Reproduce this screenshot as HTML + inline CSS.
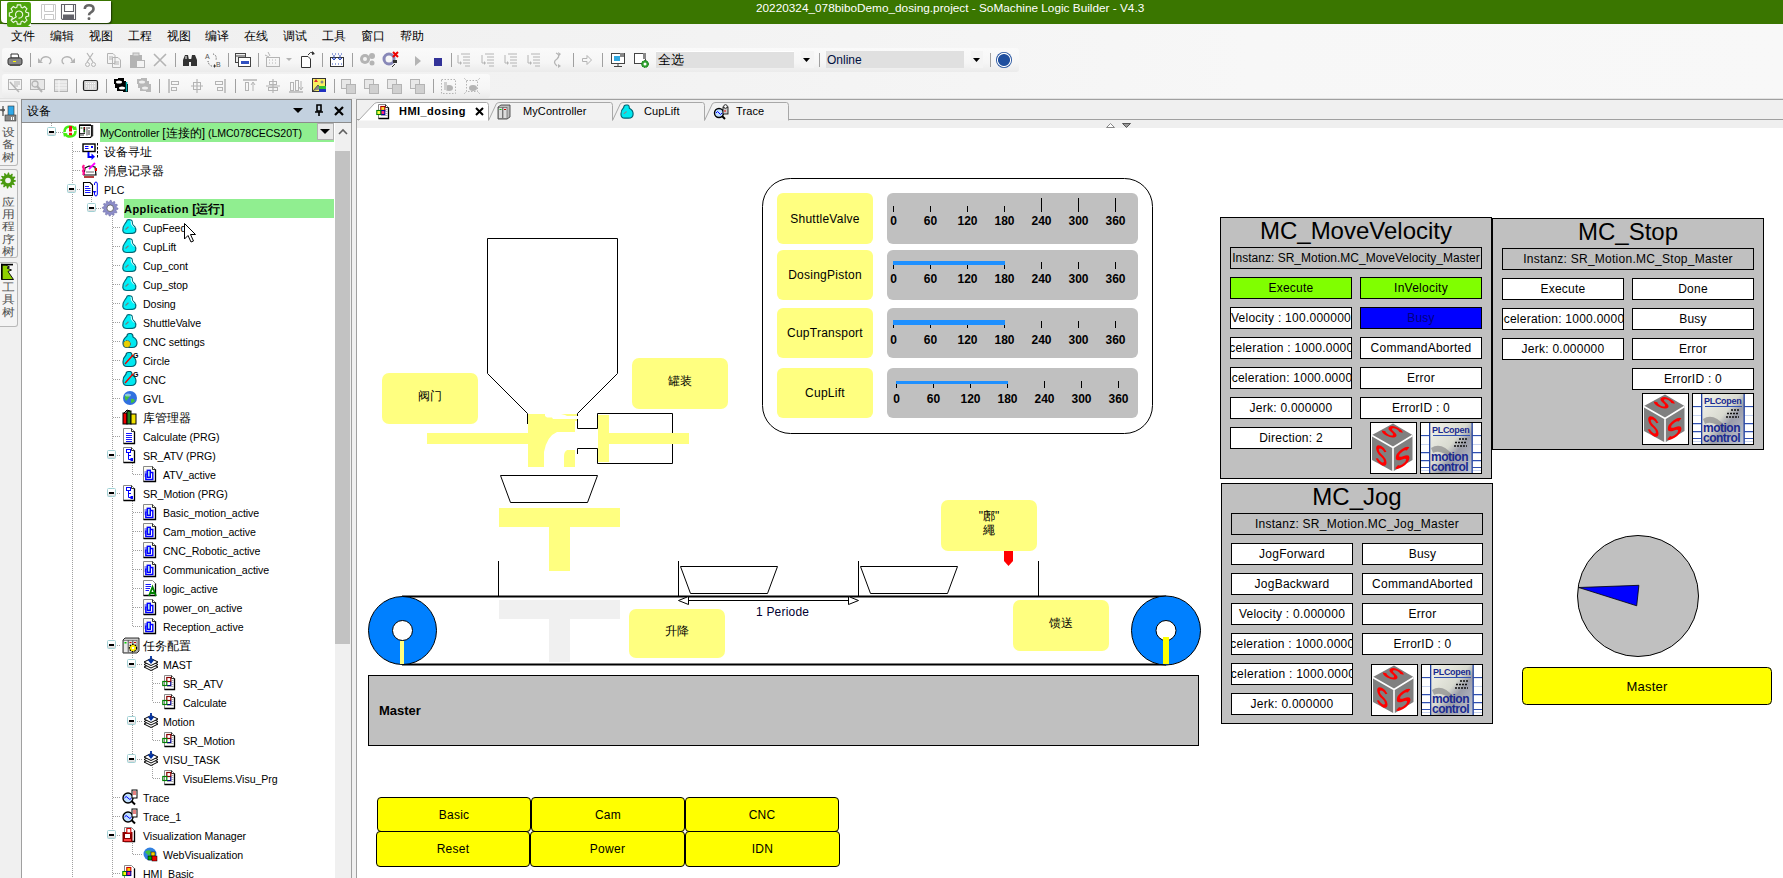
<!DOCTYPE html><html><head><meta charset="utf-8"><style>
*{margin:0;padding:0;box-sizing:border-box}
body{width:1783px;height:878px;overflow:hidden;background:#f0f0f0;font-family:"Liberation Sans",sans-serif;position:relative;color:#000}
.ab{position:absolute}
.t{position:absolute;white-space:nowrap}
svg{position:absolute;overflow:visible}
</style></head><body>

<div class="ab" style="left:0;top:24px;width:1783px;height:75px;background:linear-gradient(90deg,#efefef,#f3f3f3 40%,#f7f7f7 70%,#f8f8f8)"></div>
<div class="ab" style="left:0;top:0;width:1783px;height:24px;background:#3a7600"></div>
<div class="t" style="left:756px;top:0px;font-size:11.8px;color:#fff;line-height:17px">20220324_078biboDemo_dosing.project - SoMachine Logic Builder - V4.3</div>
<div class="ab" style="left:1px;top:1px;width:110px;height:22px;background:#fff;border-radius:0 0 4px 4px;box-shadow:1px 1px 1.5px rgba(0,0,0,.55)"></div>
<div class="ab" style="left:7px;top:2px;width:24px;height:25px;background:#4ea40e;border-radius:2px"></div>
<svg style="left:7px;top:2px" width="24" height="25" viewBox="0 0 24 25"><g fill="none" stroke="#f0f8e8" stroke-width="1.1">
<path d="M9.81 5.43 L10.34 2.84 L13.66 2.84 L14.19 5.43 L15.45 5.95 L17.66 4.50 L20.00 6.84 L18.55 9.05 L19.07 10.31 L21.66 10.84 L21.66 14.16 L19.07 14.69 L18.55 15.95 L20.00 18.16 L17.66 20.50 L15.45 19.05 L14.19 19.57 L13.66 22.16 L10.34 22.16 L9.81 19.57 L8.55 19.05 L6.34 20.50 L4.00 18.16 L5.45 15.95 L4.93 14.69 L2.34 14.16 L2.34 10.84 L4.93 10.31 L5.45 9.05 L4.00 6.84 L6.34 4.50 L8.55 5.95Z"/><path d="M5 17.5 L9.3 14.8 A3.6 3.6 0 1 1 11.5 16.1"/></g><path d="M21 24 L24 21 V24Z" fill="#fff"/></svg>
<svg style="left:40px;top:4px" width="18" height="17" viewBox="0 0 18 17"><path d="M1.5 0.5 H15.5 V15.5 H2.5 L1.5 14.5Z M4.5 0.5 V7.5 H13.5 V0.5 M4.5 15.5 V10.5 H13.5 V15.5" fill="none" stroke="#c8c8c8" stroke-width="1"/></svg>
<svg style="left:60px;top:4px" width="18" height="17" viewBox="0 0 18 17"><path d="M1.5 0.5 H15.5 V15.5 H2.5 L1.5 14.5Z M4.5 0.5 V7.5 H13.5 V0.5" fill="none" stroke="#606068" stroke-width="1.1"/><rect x="3" y="10.5" width="11" height="5" fill="#606068"/></svg>
<svg style="left:83px;top:4px" width="13" height="17" viewBox="0 0 13 17"><path d="M1.8 5 Q1.8 1.3 6 1.3 Q10.5 1.3 10.5 4.8 Q10.5 7 8 8.3 Q6 9.3 6 11.3" fill="none" stroke="#666" stroke-width="2.6"/><rect x="4.6" y="13.2" width="2.8" height="2.8" rx="1" fill="#666"/></svg>
<div class="t" style="left:11px;top:28px;font-size:12px;line-height:16px">文件</div>
<div class="t" style="left:50px;top:28px;font-size:12px;line-height:16px">编辑</div>
<div class="t" style="left:89px;top:28px;font-size:12px;line-height:16px">视图</div>
<div class="t" style="left:128px;top:28px;font-size:12px;line-height:16px">工程</div>
<div class="t" style="left:167px;top:28px;font-size:12px;line-height:16px">视图</div>
<div class="t" style="left:205px;top:28px;font-size:12px;line-height:16px">编译</div>
<div class="t" style="left:244px;top:28px;font-size:12px;line-height:16px">在线</div>
<div class="t" style="left:283px;top:28px;font-size:12px;line-height:16px">调试</div>
<div class="t" style="left:322px;top:28px;font-size:12px;line-height:16px">工具</div>
<div class="t" style="left:361px;top:28px;font-size:12px;line-height:16px">窗口</div>
<div class="t" style="left:400px;top:28px;font-size:12px;line-height:16px">帮助</div>
<div class="ab" style="left:2px;top:48px;width:1017px;height:24px;background:linear-gradient(#fafafa,#f6f6f6 60%,#ebebeb);border-radius:3px"></div>
<div class="ab" style="left:2px;top:74px;width:488px;height:24px;background:linear-gradient(#fafafa,#f6f6f6 60%,#ebebeb);border-radius:3px"></div>
<div class="ab" style="left:0;top:98px;width:1783px;height:1px;background:#e2e2e2"></div>
<div class="ab" style="left:21px;top:100px;width:331px;height:778px;background:#fff;border-left:1px solid #a0a0a0;border-right:1px solid #a0a0a0"></div>
<div class="ab" style="left:21px;top:99px;width:331px;height:24px;background:#c3d1df;border:1px solid #8c8c8c"></div>
<div class="t" style="left:27px;top:103px;font-size:12px;line-height:16px">设备</div>
<svg style="left:7px;top:52px" width="16" height="16" viewBox="0 0 16 16"><path d="M4 2 H11 L12 6 H4Z" fill="#fff" stroke="#333"/><rect x="1" y="6" width="14" height="7" rx="2" fill="#888" stroke="#333"/><rect x="3" y="12" width="10" height="2" fill="#555"/><rect x="6" y="9" width="3" height="1" fill="#ff0"/></svg>
<div class="ab" style="left:30px;top:53px;width:1px;height:14px;background:#a0a0a0"></div>
<svg style="left:38px;top:54px" width="14" height="12" viewBox="0 0 14 12"><path d="M3 7 A5 4 0 1 1 11 10" stroke="#b4b4b4" stroke-width="1.4" fill="none"/><path d="M0 4 L5 9 H0Z" fill="#b4b4b4"/></svg>
<svg style="left:61px;top:54px" width="14" height="12" viewBox="0 0 14 12"><path d="M11 7 A5 4 0 1 0 3 10" stroke="#b4b4b4" stroke-width="1.4" fill="none"/><path d="M14 4 L9 9 H14Z" fill="#b4b4b4"/></svg>
<svg style="left:85px;top:52px" width="11" height="16" viewBox="0 0 11 16"><path d="M2 1 L8 10 M8 1 L2 10" stroke="#b4b4b4" stroke-width="1.2"/><circle cx="2.5" cy="12.5" r="2" fill="none" stroke="#b4b4b4"/><circle cx="8.5" cy="12.5" r="2" fill="none" stroke="#b4b4b4"/></svg>
<svg style="left:106px;top:53px" width="16" height="14" viewBox="0 0 16 14"><path d="M1.5 0.5 H7 L9 2.5 V10.5 H1.5Z M6.5 4.5 H12 L14.5 7 V14.5 H6.5Z" fill="#f4f4f4" stroke="#b4b4b4"/><path d="M3 4 H7 M3 6 H6 M8 9 H13 M8 11 H13" stroke="#b4b4b4"/></svg>
<svg style="left:129px;top:52px" width="17" height="16" viewBox="0 0 17 16"><rect x="1.5" y="3.5" width="11" height="12" fill="#b4b4b4" stroke="#b4b4b4"/><rect x="4" y="1" width="6" height="3" fill="#ddd" stroke="#b4b4b4"/><rect x="7.5" y="8.5" width="8" height="7" fill="#f4f4f4" stroke="#b4b4b4"/></svg>
<svg style="left:153px;top:53px" width="14" height="14" viewBox="0 0 14 14"><path d="M1 1 L13 13 M13 1 L1 13" stroke="#b4b4b4" stroke-width="1.6"/></svg>
<div class="ab" style="left:175px;top:53px;width:1px;height:14px;background:#a0a0a0"></div>
<svg style="left:182px;top:53px" width="16" height="14" viewBox="0 0 16 14"><path d="M1 13 V7 L3 2 H6 L7 7 V13Z M9 13 V7 L10 2 H13 L15 7 V13Z" fill="#333"/><rect x="6" y="6" width="4" height="3" fill="#333"/><rect x="3" y="3" width="2" height="3" fill="#fff" opacity=".5"/></svg>
<svg style="left:205px;top:52px" width="17" height="16" viewBox="0 0 17 16"><text x="0" y="7" font-size="7" font-family="Liberation Sans" fill="#555">A</text><text x="11" y="15" font-size="7" font-family="Liberation Sans" fill="#555">B</text><path d="M3 9 Q4 15 9 14 M8 2 Q12 3 11 8" stroke="#555" stroke-dasharray="1 1" fill="none"/><path d="M9 12 L11 14 L9 16Z" fill="#333"/></svg>
<div class="ab" style="left:228px;top:53px;width:1px;height:14px;background:#a0a0a0"></div>
<svg style="left:234px;top:52px" width="17" height="16" viewBox="0 0 17 16"><rect x="1.5" y="1.5" width="10" height="9" fill="#eee" stroke="#444"/><rect x="4.5" y="5.5" width="12" height="9" fill="#fff" stroke="#444"/><rect x="7" y="9" width="8" height="3" fill="#3050c0"/><path d="M2 4 H11" stroke="#444"/></svg>
<div class="ab" style="left:258px;top:53px;width:1px;height:14px;background:#a0a0a0"></div>
<svg style="left:265px;top:52px" width="16" height="16" viewBox="0 0 16 16"><rect x="1.5" y="5.5" width="13" height="9" fill="none" stroke="#b4b4b4"/><path d="M4 8 H5 M7 8 H8 M10 8 H11 M4 11 H5 M7 11 H8 M10 11 H11" stroke="#b4b4b4"/><path d="M3 0 L5 4 M0 3 L4 5" stroke="#b4b4b4"/></svg>
<svg style="left:286px;top:58px" width="6" height="4" viewBox="0 0 6 4"><path d="M0 0 H6 L3 3Z" fill="#b4b4b4"/></svg>
<svg style="left:300px;top:51px" width="16" height="17" viewBox="0 0 16 17"><path d="M1.5 5.5 H8 L10.5 8 V16.5 H1.5Z" fill="#fff" stroke="#333"/><path d="M8 4 Q10 0 14 2" stroke="#333" fill="none"/><path d="M12 0 L15 3 L12 4Z" fill="#333"/></svg>
<div class="ab" style="left:322px;top:53px;width:1px;height:14px;background:#a0a0a0"></div>
<svg style="left:329px;top:52px" width="16" height="16" viewBox="0 0 16 16"><rect x="1.5" y="5.5" width="13" height="9" fill="#fff" stroke="#333"/><path d="M3 2 H4 M6 2 H7 M9 2 H10 M12 2 H13 M3 12 H4 M6 12 H7 M9 12 H10 M12 12 H13" stroke="#3050c0"/><path d="M5 3 V8 M3 6 L5 8 L7 6 M11 3 V8 M9 6 L11 8 L13 6" stroke="#3050c0" fill="none"/></svg>
<div class="ab" style="left:352px;top:53px;width:1px;height:14px;background:#a0a0a0"></div>
<svg style="left:359px;top:52px" width="17" height="16" viewBox="0 0 17 16"><circle cx="6" cy="7" r="5" fill="#b4b4b4"/><circle cx="6" cy="7" r="2" fill="#f4f4f4"/><circle cx="13" cy="4" r="3" fill="#b4b4b4"/><circle cx="13" cy="11" r="2.5" fill="#b4b4b4"/></svg>
<svg style="left:383px;top:51px" width="16" height="17" viewBox="0 0 16 17"><circle cx="6" cy="8" r="5" fill="none" stroke="#8888b8" stroke-width="3"/><path d="M10 1 L15 6 M15 1 L10 6" stroke="#e00" stroke-width="2"/><rect x="10" y="9" width="4" height="3" fill="#333"/><path d="M9 16 L12 13" stroke="#333"/></svg>
<svg style="left:415px;top:56px" width="7" height="10" viewBox="0 0 7 10"><path d="M0 0 L6 5 L0 10Z" fill="#b4b4b4"/></svg>
<svg style="left:434px;top:58px" width="8" height="8" viewBox="0 0 8 8"><rect x="0" y="0" width="8" height="8" fill="#333399"/></svg>
<div class="ab" style="left:451px;top:53px;width:1px;height:14px;background:#a0a0a0"></div>
<svg style="left:456px;top:52px" width="16" height="16" viewBox="0 0 16 16"><path d="M5 2 H14 M7 5 H14 M7 8 H14 M7 11 H14 M9 14 H14" stroke="#b4b4b4"/><path d="M2 3 V11 H5" stroke="#b4b4b4" fill="none"/><path d="M4 9 L6 11 L4 13Z" fill="#b4b4b4"/></svg>
<svg style="left:480px;top:52px" width="16" height="16" viewBox="0 0 16 16"><path d="M5 2 H14 M7 5 H14 M7 8 H14 M7 11 H14 M9 14 H14" stroke="#b4b4b4"/><path d="M2 3 V11 H5" stroke="#b4b4b4" fill="none"/><path d="M4 9 L6 11 L4 13Z" fill="#b4b4b4"/></svg>
<svg style="left:503px;top:52px" width="16" height="16" viewBox="0 0 16 16"><path d="M5 2 H14 M7 5 H14 M7 8 H14 M7 11 H14 M9 14 H14" stroke="#b4b4b4"/><path d="M2 3 V11 H5" stroke="#b4b4b4" fill="none"/><path d="M4 9 L6 11 L4 13Z" fill="#b4b4b4"/></svg>
<svg style="left:526px;top:52px" width="16" height="16" viewBox="0 0 16 16"><path d="M5 2 H14 M7 5 H14 M7 8 H14 M7 11 H14 M9 14 H14" stroke="#b4b4b4"/><path d="M2 3 V11 H5" stroke="#b4b4b4" fill="none"/><path d="M4 9 L6 11 L4 13Z" fill="#b4b4b4"/></svg>
<svg style="left:550px;top:52px" width="12" height="16" viewBox="0 0 12 16"><path d="M6 1 Q11 3 7 7 Q2 10 7 14" stroke="#b4b4b4" stroke-width="1.3" fill="none"/><path d="M8 0 L11 2 L9 4Z M8 12 L11 14 L8 16Z" fill="#b4b4b4"/></svg>
<div class="ab" style="left:573px;top:53px;width:1px;height:14px;background:#a0a0a0"></div>
<svg style="left:582px;top:55px" width="10" height="10" viewBox="0 0 10 10"><path d="M0.5 3.5 H5 V0.5 L9.5 5 L5 9.5 V6.5 H0.5Z" fill="none" stroke="#b4b4b4"/></svg>
<div class="ab" style="left:602px;top:53px;width:1px;height:14px;background:#a0a0a0"></div>
<svg style="left:610px;top:52px" width="16" height="15" viewBox="0 0 16 15"><rect x="1.5" y="1.5" width="13" height="10" fill="#fff" stroke="#444"/><rect x="4" y="4" width="6" height="5" fill="#30a8e0"/><rect x="10" y="1" width="4" height="4" fill="#888"/><path d="M8 12 V14 M4 14.5 H12" stroke="#444"/></svg>
<svg style="left:633px;top:52px" width="16" height="16" viewBox="0 0 16 16"><rect x="1.5" y="1.5" width="11" height="10" fill="#fff" stroke="#444"/><rect x="10" y="1" width="3" height="6" fill="#888"/><circle cx="12" cy="12" r="3.5" fill="#30a030" stroke="#108010" stroke-dasharray="1.5 1"/><circle cx="12" cy="12" r="1.5" fill="#fff"/></svg>
<div class="ab" style="left:656px;top:51px;width:138px;height:17px;background:#e0e0e0;border-top:1px solid #fff"></div>
<div class="t" style="left:658px;top:52px;font-size:13px;line-height:16px">全选</div>
<div class="ab" style="left:801px;top:51px;width:13px;height:17px;background:#f4f4f4"></div>
<svg style="left:803px;top:58px" width="8" height="4" viewBox="0 0 8 4"><path d="M0 0 H7 L3.5 4Z" fill="#000"/></svg>
<div class="ab" style="left:819px;top:53px;width:1px;height:14px;background:#a0a0a0"></div>
<div class="ab" style="left:826px;top:51px;width:138px;height:17px;background:#e0e0e0"></div>
<div class="t" style="left:827px;top:52px;font-size:12px;line-height:16px;color:#001040">Online</div>
<div class="ab" style="left:971px;top:51px;width:12px;height:17px;background:#f4f4f4"></div>
<svg style="left:973px;top:58px" width="8" height="4" viewBox="0 0 8 4"><path d="M0 0 H7 L3.5 4Z" fill="#000"/></svg>
<div class="ab" style="left:990px;top:53px;width:1px;height:14px;background:#a0a0a0"></div>
<svg style="left:995px;top:51px" width="18" height="18" viewBox="0 0 18 18"><circle cx="9" cy="9" r="8" fill="#1f4e9c"/><circle cx="9" cy="9" r="6.6" fill="none" stroke="#fff" stroke-width="1.1"/><circle cx="9" cy="9" r="5.6" fill="#1f4f9f"/></svg>
<svg style="left:8px;top:79px" width="15" height="13" viewBox="0 0 15 13"><rect x="0.5" y="0.5" width="13" height="10" fill="#f4f4f4" stroke="#b4b4b4"/><path d="M6 3 H12 M6 5 H12 M6 7 H10" stroke="#b4b4b4"/><path d="M2 3 L9 11 L11 13" stroke="#b4b4b4" stroke-width="1.5"/></svg>
<svg style="left:30px;top:79px" width="15" height="14" viewBox="0 0 15 14"><rect x="0.5" y="0.5" width="14" height="10" fill="#e8e8e8" stroke="#b4b4b4"/><circle cx="5" cy="5" r="3" fill="none" stroke="#b4b4b4" stroke-width="1.3"/><path d="M7 7 L12 13" stroke="#b4b4b4" stroke-width="2"/></svg>
<svg style="left:54px;top:79px" width="14" height="13" viewBox="0 0 14 13"><rect x="0.5" y="0.5" width="13" height="12" fill="#e0e0e0" stroke="#b4b4b4"/><path d="M1 3 H13 M1 6 H13 M1 9 H13 M5 1 V13" stroke="#f8f8f8"/></svg>
<div class="ab" style="left:76px;top:79px;width:1px;height:14px;background:#a0a0a0"></div>
<svg style="left:83px;top:80px" width="15" height="11" viewBox="0 0 15 11"><rect x="0.5" y="0.5" width="14" height="10" rx="1.5" fill="#d8d8d8" stroke="#222" stroke-width="1.2"/><path d="M3 3.5 H12 M3 6 H12 M5 8 H10" stroke="#fff" stroke-dasharray="1 1"/></svg>
<div class="ab" style="left:106px;top:79px;width:1px;height:14px;background:#a0a0a0"></div>
<svg style="left:114px;top:78px" width="14" height="14" viewBox="0 0 14 14"><path d="M0 1 H4 V0 H10 V3 H12 V6 H14 V14 H9 V13 H3 V10 H1 V6 H0Z" fill="#000"/><ellipse cx="5" cy="4" rx="3" ry="1.5" fill="#fff"/><ellipse cx="8" cy="10" rx="3" ry="1.5" fill="#fff"/><path d="M12.5 4 V13.5" stroke="#0aa" stroke-width="1.5"/></svg>
<svg style="left:137px;top:78px" width="14" height="14" viewBox="0 0 14 14"><path d="M0 1 H4 V0 H10 V3 H12 V6 H14 V14 H9 V13 H3 V10 H1 V6 H0Z" fill="#b8b8b8"/><ellipse cx="5" cy="4" rx="3" ry="1.5" fill="#eee"/><ellipse cx="8" cy="10" rx="3" ry="1.5" fill="#eee"/></svg>
<div class="ab" style="left:159px;top:79px;width:1px;height:14px;background:#a0a0a0"></div>
<svg style="left:168px;top:79px" width="12" height="14" viewBox="0 0 12 14"><path d="M1 0 V14" stroke="#b4b4b4" stroke-width="1.5"/><rect x="3.5" y="2.5" width="7" height="3" fill="none" stroke="#b4b4b4"/><rect x="3.5" y="8.5" width="5" height="3" fill="none" stroke="#b4b4b4"/></svg>
<svg style="left:191px;top:79px" width="12" height="14" viewBox="0 0 12 14"><path d="M6 0 V14" stroke="#b4b4b4" stroke-width="1.2"/><rect x="2.5" y="3.5" width="7" height="7" fill="none" stroke="#b4b4b4"/><path d="M0 7 H12" stroke="#b4b4b4"/></svg>
<svg style="left:214px;top:79px" width="12" height="14" viewBox="0 0 12 14"><path d="M11 0 V14" stroke="#b4b4b4" stroke-width="1.5"/><rect x="1.5" y="2.5" width="7" height="3" fill="none" stroke="#b4b4b4"/><rect x="3.5" y="8.5" width="5" height="3" fill="none" stroke="#b4b4b4"/></svg>
<div class="ab" style="left:235px;top:79px;width:1px;height:14px;background:#a0a0a0"></div>
<svg style="left:243px;top:79px" width="14" height="14" viewBox="0 0 14 14"><path d="M0 1 H14" stroke="#b4b4b4" stroke-width="1.5"/><rect x="2.5" y="3.5" width="3" height="8" fill="none" stroke="#b4b4b4"/><path d="M10 12 V4 M8 6 L10 3 L12 6" stroke="#b4b4b4" fill="none"/></svg>
<svg style="left:266px;top:79px" width="14" height="14" viewBox="0 0 14 14"><path d="M7 0 V14 M0 7 H14" stroke="#b4b4b4" stroke-width="1.2"/><rect x="3.5" y="2.5" width="7" height="3" fill="none" stroke="#b4b4b4"/><rect x="2.5" y="8.5" width="9" height="3" fill="none" stroke="#b4b4b4"/></svg>
<svg style="left:289px;top:79px" width="14" height="14" viewBox="0 0 14 14"><path d="M0 13 H14" stroke="#b4b4b4" stroke-width="1.5"/><rect x="1.5" y="3.5" width="3" height="8" fill="none" stroke="#b4b4b4"/><rect x="6.5" y="1.5" width="3" height="10" fill="none" stroke="#b4b4b4"/><path d="M12 2 V10 M10 8 L12 11 L14 8" stroke="#b4b4b4" fill="none"/></svg>
<svg style="left:312px;top:78px" width="14" height="15" viewBox="0 0 14 15"><rect x="0.5" y="0.5" width="13" height="13" fill="#f8f060" stroke="#333"/><path d="M2 4 L4 1 L6 4Z" fill="#e03030"/><circle cx="10" cy="4" r="1.5" fill="#888"/><path d="M1 13 L6 7 L9 11" fill="#888" stroke="#555"/><rect x="7" y="8" width="7" height="3" fill="#30c030"/><rect x="7" y="11" width="7" height="3" fill="#2030c0"/></svg>
<div class="ab" style="left:334px;top:79px;width:1px;height:14px;background:#a0a0a0"></div>
<svg style="left:341px;top:79px" width="15" height="15" viewBox="0 0 15 15"><rect x="0.5" y="0.5" width="9" height="9" fill="#e8e8e8" stroke="#b4b4b4"/><rect x="5.5" y="5.5" width="9" height="9" fill="#d0d0d0" stroke="#b4b4b4"/></svg>
<svg style="left:364px;top:79px" width="15" height="15" viewBox="0 0 15 15"><rect x="0.5" y="0.5" width="9" height="9" fill="#e8e8e8" stroke="#b4b4b4"/><rect x="5.5" y="5.5" width="9" height="9" fill="#d0d0d0" stroke="#b4b4b4"/></svg>
<svg style="left:387px;top:79px" width="15" height="15" viewBox="0 0 15 15"><rect x="0.5" y="0.5" width="9" height="9" fill="#e8e8e8" stroke="#b4b4b4"/><rect x="5.5" y="5.5" width="9" height="9" fill="#d0d0d0" stroke="#b4b4b4"/></svg>
<svg style="left:410px;top:79px" width="15" height="15" viewBox="0 0 15 15"><rect x="0.5" y="0.5" width="9" height="9" fill="#e8e8e8" stroke="#b4b4b4"/><rect x="5.5" y="5.5" width="9" height="9" fill="#d0d0d0" stroke="#b4b4b4"/></svg>
<div class="ab" style="left:433px;top:79px;width:1px;height:14px;background:#a0a0a0"></div>
<svg style="left:441px;top:79px" width="15" height="15" viewBox="0 0 15 15"><rect x="0.5" y="0.5" width="14" height="14" fill="none" stroke="#b4b4b4" stroke-dasharray="1.5 1.5"/><ellipse cx="8" cy="9" rx="4" ry="3" fill="#b4b4b4"/><rect x="3" y="3" width="3" height="8" fill="#d0d0d0"/></svg>
<svg style="left:464px;top:78px" width="16" height="16" viewBox="0 0 16 16"><path d="M0 0 L3 3 M16 0 L13 3 M0 16 L3 13 M16 16 L13 13" stroke="#b4b4b4" stroke-dasharray="1 1"/><rect x="2.5" y="2.5" width="11" height="11" fill="none" stroke="#b4b4b4" stroke-dasharray="1.5 1.5"/><ellipse cx="9" cy="10" rx="4" ry="3" fill="#b4b4b4"/></svg>
<svg style="left:293px;top:108px" width="10" height="6"><path d="M0 0 H10 L5 5Z" fill="#000"/></svg>
<svg style="left:314px;top:104px" width="10" height="13" viewBox="0 0 10 13"><path d="M3 1 H7 V7 H3Z" fill="none" stroke="#000" stroke-width="1.6"/><path d="M1 8 H9 M5 8 V12" stroke="#000" stroke-width="1.6"/></svg>
<svg style="left:334px;top:106px" width="10" height="10" viewBox="0 0 10 10"><path d="M1 1 L9 9 M9 1 L1 9" stroke="#000" stroke-width="2.2"/></svg>
<div class="ab" style="left:0px;top:101px;width:19px;height:777px;background:#f0f0f0"></div>
<div class="ab" style="left:0px;top:101px;width:18px;height:65px;border:1px solid #b8b8b8;border-left:none;border-radius:0 3px 3px 0;background:#f4f4f4"></div>
<svg style="left:0px;top:104px" width="17" height="18" viewBox="0 0 17 18"><path d="M0 6 H5 M3 2 V12" stroke="#555" stroke-width="1.3"/><circle cx="3" cy="6" r="1.6" fill="#555"/><rect x="8" y="2" width="6" height="10" fill="#30a8e8" stroke="#333" stroke-width=".6"/><rect x="5" y="11" width="11" height="6" fill="#888" stroke="#333" stroke-width=".6"/><rect x="11" y="13" width="1" height="3" fill="#fff"/><rect x="13" y="13" width="1" height="3" fill="#fff"/></svg>
<div class="t" style="left:0px;top:126.69999999999999px;width:16px;text-align:center;font-size:12.5px;line-height:12px;color:#505050;transform:scaleY(0.86)">设</div>
<div class="t" style="left:0px;top:139.1px;width:16px;text-align:center;font-size:12.5px;line-height:12px;color:#505050;transform:scaleY(0.86)">备</div>
<div class="t" style="left:0px;top:151.5px;width:16px;text-align:center;font-size:12.5px;line-height:12px;color:#505050;transform:scaleY(0.86)">树</div>
<div class="ab" style="left:0px;top:169px;width:18px;height:89px;border:1px solid #b8b8b8;border-left:none;border-radius:0 3px 3px 0;background:#f4f4f4"></div>
<svg style="left:0px;top:172px" width="17" height="17" viewBox="0 0 17 17"><path d="M16.00 8.50 L15.93 9.54 L13.80 10.05 L13.54 10.80 L14.93 12.50 L14.35 13.37 L12.24 12.74 L11.65 13.26 L12.00 15.43 L11.06 15.89 L9.55 14.30 L8.78 14.45 L8.00 16.50 L6.96 16.43 L6.45 14.30 L5.70 14.04 L4.00 15.43 L3.13 14.85 L3.76 12.74 L3.24 12.15 L1.07 12.50 L0.61 11.56 L2.20 10.05 L2.05 9.28 L0.00 8.50 L0.07 7.46 L2.20 6.95 L2.46 6.20 L1.07 4.50 L1.65 3.63 L3.76 4.26 L4.35 3.74 L4.00 1.57 L4.94 1.11 L6.45 2.70 L7.22 2.55 L8.00 0.50 L9.04 0.57 L9.55 2.70 L10.30 2.96 L12.00 1.57 L12.87 2.15 L12.24 4.26 L12.76 4.85 L14.93 4.50 L15.39 5.44 L13.80 6.95 L13.95 7.72Z" fill="#4a9a10"/><circle cx="8" cy="8.5" r="2.8" fill="#f4f4f4"/></svg>
<div class="t" style="left:0px;top:196.5px;width:16px;text-align:center;font-size:12.5px;line-height:12px;color:#505050;transform:scaleY(0.86)">应</div>
<div class="t" style="left:0px;top:208.9px;width:16px;text-align:center;font-size:12.5px;line-height:12px;color:#505050;transform:scaleY(0.86)">用</div>
<div class="t" style="left:0px;top:221.3px;width:16px;text-align:center;font-size:12.5px;line-height:12px;color:#505050;transform:scaleY(0.86)">程</div>
<div class="t" style="left:0px;top:233.7px;width:16px;text-align:center;font-size:12.5px;line-height:12px;color:#505050;transform:scaleY(0.86)">序</div>
<div class="t" style="left:0px;top:246.1px;width:16px;text-align:center;font-size:12.5px;line-height:12px;color:#505050;transform:scaleY(0.86)">树</div>
<div class="ab" style="left:0px;top:262px;width:18px;height:65px;border:1px solid #b8b8b8;border-left:none;border-radius:0 3px 3px 0;background:#f4f4f4"></div>
<svg style="left:0px;top:263px" width="17" height="19" viewBox="0 0 17 19"><path d="M2 2 H6 L9.5 4 L7 5 L11.5 7 L8 8.5 L13.5 16.5 H2Z" fill="#8fd000" stroke="#111" stroke-width="1"/><rect x="1" y="0.8" width="12" height="1.6" fill="#000"/><rect x="1" y="0.8" width="1.4" height="16" fill="#000"/></svg>
<div class="t" style="left:0px;top:281.7px;width:16px;text-align:center;font-size:12.5px;line-height:12px;color:#505050;transform:scaleY(0.86)">工</div>
<div class="t" style="left:0px;top:294.09999999999997px;width:16px;text-align:center;font-size:12.5px;line-height:12px;color:#505050;transform:scaleY(0.86)">具</div>
<div class="t" style="left:0px;top:306.5px;width:16px;text-align:center;font-size:12.5px;line-height:12px;color:#505050;transform:scaleY(0.86)">树</div>
<div class="ab" style="left:100px;top:123px;width:234px;height:19px;background:#90ee90"></div>
<div class="ab" style="left:124px;top:199px;width:210px;height:19px;background:#90ee90"></div>
<svg style="left:63px;top:125px" width="14" height="13" viewBox="0 0 14 13"><path d="M1.5 7 Q1.5 1.5 7 1.5 Q10.5 1.5 12 4" stroke="#44ee10" stroke-width="2.6" fill="none"/><path d="M9.5 4.5 L14 5.5 L13 1Z" fill="#44ee10"/><path d="M12.5 6 Q12.5 11.5 7 11.5 Q3.5 11.5 2 9" stroke="#44ee10" stroke-width="2.6" fill="none"/><path d="M4.5 8.5 L0 7.5 L1 12Z" fill="#44ee10"/><rect x="6" y="1" width="3" height="5.5" fill="#ee1010"/><rect x="6" y="7.8" width="3" height="2.5" fill="#ee1010"/></svg>
<div class="ab" style="left:317px;top:123px;width:17px;height:17px;background:#e8e8e8;border:1px solid #b0b0b0"></div><svg style="left:320px;top:129px" width="11" height="6"><path d="M0 0 H10 L5 5Z" fill="#000"/></svg>
<div class="ab" style="left:335px;top:123px;width:16px;height:755px;background:#f0f0f0"></div><div class="ab" style="left:335px;top:151px;width:15px;height:493px;background:#c2c2c2"></div><svg style="left:338px;top:128px" width="10" height="8"><path d="M1 6 L5 2 L9 6" stroke="#606060" stroke-width="1.6" fill="none"/></svg>
<div class="ab" style="left:72px;top:142px;width:1px;height:736px;background:repeating-linear-gradient(#a0a0a0 0 1px,transparent 1px 2px)"></div>
<div class="ab" style="left:73px;top:151px;width:8px;height:1px;background:repeating-linear-gradient(90deg,#a0a0a0 0 1px,transparent 1px 2px)"></div>
<div class="ab" style="left:73px;top:170px;width:8px;height:1px;background:repeating-linear-gradient(90deg,#a0a0a0 0 1px,transparent 1px 2px)"></div>
<div class="ab" style="left:73px;top:189px;width:8px;height:1px;background:repeating-linear-gradient(90deg,#a0a0a0 0 1px,transparent 1px 2px)"></div>
<div class="ab" style="left:91px;top:195px;width:1px;height:13px;background:repeating-linear-gradient(#a0a0a0 0 1px,transparent 1px 2px)"></div>
<div class="ab" style="left:92px;top:208px;width:9px;height:1px;background:repeating-linear-gradient(90deg,#a0a0a0 0 1px,transparent 1px 2px)"></div>
<div class="ab" style="left:112px;top:214px;width:1px;height:664px;background:repeating-linear-gradient(#a0a0a0 0 1px,transparent 1px 2px)"></div>
<div class="ab" style="left:113px;top:227px;width:8px;height:1px;background:repeating-linear-gradient(90deg,#a0a0a0 0 1px,transparent 1px 2px)"></div>
<div class="ab" style="left:113px;top:246px;width:8px;height:1px;background:repeating-linear-gradient(90deg,#a0a0a0 0 1px,transparent 1px 2px)"></div>
<div class="ab" style="left:113px;top:265px;width:8px;height:1px;background:repeating-linear-gradient(90deg,#a0a0a0 0 1px,transparent 1px 2px)"></div>
<div class="ab" style="left:113px;top:284px;width:8px;height:1px;background:repeating-linear-gradient(90deg,#a0a0a0 0 1px,transparent 1px 2px)"></div>
<div class="ab" style="left:113px;top:303px;width:8px;height:1px;background:repeating-linear-gradient(90deg,#a0a0a0 0 1px,transparent 1px 2px)"></div>
<div class="ab" style="left:113px;top:322px;width:8px;height:1px;background:repeating-linear-gradient(90deg,#a0a0a0 0 1px,transparent 1px 2px)"></div>
<div class="ab" style="left:113px;top:341px;width:8px;height:1px;background:repeating-linear-gradient(90deg,#a0a0a0 0 1px,transparent 1px 2px)"></div>
<div class="ab" style="left:113px;top:360px;width:8px;height:1px;background:repeating-linear-gradient(90deg,#a0a0a0 0 1px,transparent 1px 2px)"></div>
<div class="ab" style="left:113px;top:379px;width:8px;height:1px;background:repeating-linear-gradient(90deg,#a0a0a0 0 1px,transparent 1px 2px)"></div>
<div class="ab" style="left:113px;top:398px;width:8px;height:1px;background:repeating-linear-gradient(90deg,#a0a0a0 0 1px,transparent 1px 2px)"></div>
<div class="ab" style="left:113px;top:417px;width:8px;height:1px;background:repeating-linear-gradient(90deg,#a0a0a0 0 1px,transparent 1px 2px)"></div>
<div class="ab" style="left:113px;top:436px;width:8px;height:1px;background:repeating-linear-gradient(90deg,#a0a0a0 0 1px,transparent 1px 2px)"></div>
<div class="ab" style="left:113px;top:455px;width:8px;height:1px;background:repeating-linear-gradient(90deg,#a0a0a0 0 1px,transparent 1px 2px)"></div>
<div class="ab" style="left:113px;top:493px;width:8px;height:1px;background:repeating-linear-gradient(90deg,#a0a0a0 0 1px,transparent 1px 2px)"></div>
<div class="ab" style="left:113px;top:645px;width:8px;height:1px;background:repeating-linear-gradient(90deg,#a0a0a0 0 1px,transparent 1px 2px)"></div>
<div class="ab" style="left:113px;top:797px;width:8px;height:1px;background:repeating-linear-gradient(90deg,#a0a0a0 0 1px,transparent 1px 2px)"></div>
<div class="ab" style="left:113px;top:816px;width:8px;height:1px;background:repeating-linear-gradient(90deg,#a0a0a0 0 1px,transparent 1px 2px)"></div>
<div class="ab" style="left:113px;top:835px;width:8px;height:1px;background:repeating-linear-gradient(90deg,#a0a0a0 0 1px,transparent 1px 2px)"></div>
<div class="ab" style="left:113px;top:873px;width:8px;height:1px;background:repeating-linear-gradient(90deg,#a0a0a0 0 1px,transparent 1px 2px)"></div>
<div class="ab" style="left:132px;top:461px;width:1px;height:13px;background:repeating-linear-gradient(#a0a0a0 0 1px,transparent 1px 2px)"></div>
<div class="ab" style="left:133px;top:474px;width:9px;height:1px;background:repeating-linear-gradient(90deg,#a0a0a0 0 1px,transparent 1px 2px)"></div>
<div class="ab" style="left:132px;top:499px;width:1px;height:127px;background:repeating-linear-gradient(#a0a0a0 0 1px,transparent 1px 2px)"></div>
<div class="ab" style="left:133px;top:512px;width:9px;height:1px;background:repeating-linear-gradient(90deg,#a0a0a0 0 1px,transparent 1px 2px)"></div>
<div class="ab" style="left:133px;top:531px;width:9px;height:1px;background:repeating-linear-gradient(90deg,#a0a0a0 0 1px,transparent 1px 2px)"></div>
<div class="ab" style="left:133px;top:550px;width:9px;height:1px;background:repeating-linear-gradient(90deg,#a0a0a0 0 1px,transparent 1px 2px)"></div>
<div class="ab" style="left:133px;top:569px;width:9px;height:1px;background:repeating-linear-gradient(90deg,#a0a0a0 0 1px,transparent 1px 2px)"></div>
<div class="ab" style="left:133px;top:588px;width:9px;height:1px;background:repeating-linear-gradient(90deg,#a0a0a0 0 1px,transparent 1px 2px)"></div>
<div class="ab" style="left:133px;top:607px;width:9px;height:1px;background:repeating-linear-gradient(90deg,#a0a0a0 0 1px,transparent 1px 2px)"></div>
<div class="ab" style="left:133px;top:626px;width:9px;height:1px;background:repeating-linear-gradient(90deg,#a0a0a0 0 1px,transparent 1px 2px)"></div>
<div class="ab" style="left:132px;top:651px;width:1px;height:108px;background:repeating-linear-gradient(#a0a0a0 0 1px,transparent 1px 2px)"></div>
<div class="ab" style="left:133px;top:664px;width:9px;height:1px;background:repeating-linear-gradient(90deg,#a0a0a0 0 1px,transparent 1px 2px)"></div>
<div class="ab" style="left:133px;top:721px;width:9px;height:1px;background:repeating-linear-gradient(90deg,#a0a0a0 0 1px,transparent 1px 2px)"></div>
<div class="ab" style="left:133px;top:759px;width:9px;height:1px;background:repeating-linear-gradient(90deg,#a0a0a0 0 1px,transparent 1px 2px)"></div>
<div class="ab" style="left:152px;top:670px;width:1px;height:32px;background:repeating-linear-gradient(#a0a0a0 0 1px,transparent 1px 2px)"></div>
<div class="ab" style="left:153px;top:683px;width:8px;height:1px;background:repeating-linear-gradient(90deg,#a0a0a0 0 1px,transparent 1px 2px)"></div>
<div class="ab" style="left:153px;top:702px;width:8px;height:1px;background:repeating-linear-gradient(90deg,#a0a0a0 0 1px,transparent 1px 2px)"></div>
<div class="ab" style="left:152px;top:727px;width:1px;height:13px;background:repeating-linear-gradient(#a0a0a0 0 1px,transparent 1px 2px)"></div>
<div class="ab" style="left:153px;top:740px;width:8px;height:1px;background:repeating-linear-gradient(90deg,#a0a0a0 0 1px,transparent 1px 2px)"></div>
<div class="ab" style="left:152px;top:765px;width:1px;height:13px;background:repeating-linear-gradient(#a0a0a0 0 1px,transparent 1px 2px)"></div>
<div class="ab" style="left:153px;top:778px;width:8px;height:1px;background:repeating-linear-gradient(90deg,#a0a0a0 0 1px,transparent 1px 2px)"></div>
<div class="ab" style="left:132px;top:841px;width:1px;height:13px;background:repeating-linear-gradient(#a0a0a0 0 1px,transparent 1px 2px)"></div>
<div class="ab" style="left:133px;top:854px;width:9px;height:1px;background:repeating-linear-gradient(90deg,#a0a0a0 0 1px,transparent 1px 2px)"></div>
<div class="ab" style="left:51px;top:123px;width:1px;height:5px;background:repeating-linear-gradient(#a0a0a0 0 1px,transparent 1px 2px)"></div>
<div class="ab" style="left:56px;top:132px;width:7px;height:1px;background:repeating-linear-gradient(90deg,#a0a0a0 0 1px,transparent 1px 2px)"></div>
<div class="ab" style="left:47px;top:127px;width:9px;height:9px;border:1px solid #a0d0d4;background:linear-gradient(#fff 40%,#d8d8d8);border-radius:1.5px"></div><div class="ab" style="left:49px;top:131px;width:5px;height:1.5px;background:#000"></div>
<svg style="left:78px;top:124px" width="16" height="16" viewBox="0 0 16 16"><path d="M1.5 1.5 H13.5 V12 L12.5 13.5 H1.5Z" fill="#fff" stroke="#000" stroke-width="1.1"/><path d="M13.5 1 H15.2 V11.8 L13.5 13.5" fill="#333"/><path d="M1 1 L2 0 L3 1 L4 0 L5 1 L6 0 L7 1 L8 0 L9 1 L10 0 L11 1 L12 0 L13 1" stroke="#000" stroke-width=".7" fill="none"/><rect x="2.5" y="3.5" width="2" height="1" fill="#060"/><rect x="5.5" y="3" width="1.6" height="5.5" fill="#000"/><rect x="5.8" y="3.5" width="1" height="1.2" fill="#e00"/><rect x="5.8" y="6.5" width="1" height="1.2" fill="#0c0"/><rect x="8.2" y="3" width="1.6" height="8.5" fill="#909090"/><path d="M11 3 V5 M10.5 6 L11.5 7 L10.5 8 L11.5 9 L10.5 10 L11.5 11" stroke="#000" stroke-width=".8" fill="none"/><path d="M2 9.5 H7 M3 10 V12 M5 10 V12" stroke="#000" stroke-width=".8"/></svg>
<div class="t" style="left:100px;top:125px;font-size:10.6px;letter-spacing:-0.05px;line-height:17px;color:#000">MyController <span style="font-size:12px;letter-spacing:0">[连接的]</span> (LMC078CECS20T)</div>
<svg style="left:82px;top:143px" width="16" height="16" viewBox="0 0 16 16"><rect x="1" y="1" width="12" height="7.5" fill="#fff" stroke="#000" stroke-width="1.4"/><path d="M3 3.5 H6.5 M3 5.5 H6.5" stroke="#00f" stroke-width="1"/><rect x="9" y="3" width="2" height="2" fill="#00f"/><path d="M6.5 9 V14 H10" stroke="#00f" stroke-width="2" fill="none"/><path d="M9.5 10.5 L13 13.8 L9.5 17Z" fill="#00f"/><path d="M15.5 0 V16" stroke="#000" stroke-width="1" stroke-dasharray="2.5 1.5"/></svg>
<div class="t" style="left:104px;top:144px;font-size:10.6px;letter-spacing:-0.05px;line-height:17px;color:#000"><span style="font-size:12px;letter-spacing:0">设备寻址</span></div>
<svg style="left:82px;top:162px" width="16" height="16" viewBox="0 0 16 16"><path d="M3 6 L7 4 L13 5 L14 13 L2 13Z" fill="#fff" stroke="#000" stroke-width="1.2"/><path d="M2 3 L1 5 L2 7 L1 9 L2 11 L1 13" stroke="#ff1493" stroke-width="2.2" fill="none"/><path d="M7 7 L13 1" stroke="#ff00ff" stroke-width="1.8"/><path d="M4 10 H12" stroke="#666"/><path d="M2 15 H12" stroke="#a00000" stroke-width="1.5"/><rect x="13" y="6" width="2" height="3" fill="#e00"/></svg>
<div class="t" style="left:104px;top:163px;font-size:10.6px;letter-spacing:-0.05px;line-height:17px;color:#000"><span style="font-size:12px;letter-spacing:0">消息记录器</span></div>
<div class="ab" style="left:67px;top:184px;width:9px;height:9px;border:1px solid #a0d0d4;background:linear-gradient(#fff 40%,#d8d8d8);border-radius:1.5px"></div><div class="ab" style="left:69px;top:188px;width:5px;height:1.5px;background:#000"></div>
<svg style="left:82px;top:181px" width="16" height="16" viewBox="0 0 16 16"><path d="M1.5 1.5 H8 L10.5 4 V14.5 H1.5Z" fill="#fff" stroke="#000" stroke-width="1.1"/><path d="M3 5.5 H7 M3 7.5 H8.5 M3 9.5 H8.5 M3 11.5 H8.5" stroke="#00f" stroke-width=".9"/><path d="M12.5 10 V13 Q12.5 15 14 15 Q15.3 15 15.3 13 V3 Q15.3 1 14 1 Q12.5 1 12.5 3 V4" stroke="#00f" stroke-width="1" fill="none"/><path d="M11 10 L12.5 12 L14 10" stroke="#00f" fill="none"/></svg>
<div class="t" style="left:104px;top:182px;font-size:10.6px;letter-spacing:-0.05px;line-height:17px;color:#000">PLC</div>
<div class="ab" style="left:87px;top:203px;width:9px;height:9px;border:1px solid #a0d0d4;background:linear-gradient(#fff 40%,#d8d8d8);border-radius:1.5px"></div><div class="ab" style="left:89px;top:207px;width:5px;height:1.5px;background:#000"></div>
<svg style="left:102px;top:200px" width="16" height="16" viewBox="0 0 16 16"><path d="M16.10 8.20 L16.03 9.23 L14.29 9.83 L14.02 10.61 L15.04 12.15 L14.47 13.01 L12.65 12.65 L12.04 13.20 L12.15 15.04 L11.22 15.50 L9.83 14.29 L9.02 14.45 L8.20 16.10 L7.17 16.03 L6.57 14.29 L5.79 14.02 L4.25 15.04 L3.39 14.47 L3.75 12.65 L3.20 12.04 L1.36 12.15 L0.90 11.22 L2.11 9.83 L1.95 9.02 L0.30 8.20 L0.37 7.17 L2.11 6.57 L2.38 5.79 L1.36 4.25 L1.93 3.39 L3.75 3.75 L4.36 3.20 L4.25 1.36 L5.18 0.90 L6.57 2.11 L7.38 1.95 L8.20 0.30 L9.23 0.37 L9.83 2.11 L10.61 2.38 L12.15 1.36 L13.01 1.93 L12.65 3.75 L13.20 4.36 L15.04 4.25 L15.50 5.18 L14.29 6.57 L14.45 7.38Z" fill="#8c8cc8" stroke="#6a6aa0" stroke-width=".5"/><circle cx="8.2" cy="8.2" r="3.3" fill="#fff" stroke="#555" stroke-width=".8"/></svg>
<div class="t" style="left:124px;top:201px;font-size:10.6px;letter-spacing:-0.05px;line-height:17px;font-weight:bold;letter-spacing:0.45px;font-size:11px;color:#000">Application <span style="font-size:12px;letter-spacing:0">[运行]</span></div>
<svg style="left:122px;top:219px" width="16" height="16" viewBox="0 0 16 16"><path d="M4.5 2.5 Q5 0.5 7 0.7 L9 1 Q10.5 1.5 10.3 4.5 Q10.6 6 12.8 7.8 Q14.6 10 13.6 12.6 Q12.5 14.6 9.5 14.3 L5 14.5 Q1.2 14.5 0.8 11.5 Q0.5 8 2.5 5.5 Z" fill="#00f0f8" stroke="#006a78" stroke-width="1.2"/><path d="M3.5 10.5 L6.5 7.8" stroke="#708080" stroke-width="1.2"/><path d="M8.8 1.8 Q9.6 3 9.4 5 Q10.5 7 12.2 8.6" stroke="#fff" stroke-width=".9" fill="none"/></svg>
<div class="t" style="left:143px;top:220px;font-size:10.6px;letter-spacing:-0.05px;line-height:17px;color:#000">CupFeed</div>
<svg style="left:122px;top:238px" width="16" height="16" viewBox="0 0 16 16"><path d="M4.5 2.5 Q5 0.5 7 0.7 L9 1 Q10.5 1.5 10.3 4.5 Q10.6 6 12.8 7.8 Q14.6 10 13.6 12.6 Q12.5 14.6 9.5 14.3 L5 14.5 Q1.2 14.5 0.8 11.5 Q0.5 8 2.5 5.5 Z" fill="#00f0f8" stroke="#006a78" stroke-width="1.2"/><path d="M3.5 10.5 L6.5 7.8" stroke="#708080" stroke-width="1.2"/><path d="M8.8 1.8 Q9.6 3 9.4 5 Q10.5 7 12.2 8.6" stroke="#fff" stroke-width=".9" fill="none"/></svg>
<div class="t" style="left:143px;top:239px;font-size:10.6px;letter-spacing:-0.05px;line-height:17px;color:#000">CupLift</div>
<svg style="left:122px;top:257px" width="16" height="16" viewBox="0 0 16 16"><path d="M4.5 2.5 Q5 0.5 7 0.7 L9 1 Q10.5 1.5 10.3 4.5 Q10.6 6 12.8 7.8 Q14.6 10 13.6 12.6 Q12.5 14.6 9.5 14.3 L5 14.5 Q1.2 14.5 0.8 11.5 Q0.5 8 2.5 5.5 Z" fill="#00f0f8" stroke="#006a78" stroke-width="1.2"/><path d="M3.5 10.5 L6.5 7.8" stroke="#708080" stroke-width="1.2"/><path d="M8.8 1.8 Q9.6 3 9.4 5 Q10.5 7 12.2 8.6" stroke="#fff" stroke-width=".9" fill="none"/></svg>
<div class="t" style="left:143px;top:258px;font-size:10.6px;letter-spacing:-0.05px;line-height:17px;color:#000">Cup_cont</div>
<svg style="left:122px;top:276px" width="16" height="16" viewBox="0 0 16 16"><path d="M4.5 2.5 Q5 0.5 7 0.7 L9 1 Q10.5 1.5 10.3 4.5 Q10.6 6 12.8 7.8 Q14.6 10 13.6 12.6 Q12.5 14.6 9.5 14.3 L5 14.5 Q1.2 14.5 0.8 11.5 Q0.5 8 2.5 5.5 Z" fill="#00f0f8" stroke="#006a78" stroke-width="1.2"/><path d="M3.5 10.5 L6.5 7.8" stroke="#708080" stroke-width="1.2"/><path d="M8.8 1.8 Q9.6 3 9.4 5 Q10.5 7 12.2 8.6" stroke="#fff" stroke-width=".9" fill="none"/></svg>
<div class="t" style="left:143px;top:277px;font-size:10.6px;letter-spacing:-0.05px;line-height:17px;color:#000">Cup_stop</div>
<svg style="left:122px;top:295px" width="16" height="16" viewBox="0 0 16 16"><path d="M4.5 2.5 Q5 0.5 7 0.7 L9 1 Q10.5 1.5 10.3 4.5 Q10.6 6 12.8 7.8 Q14.6 10 13.6 12.6 Q12.5 14.6 9.5 14.3 L5 14.5 Q1.2 14.5 0.8 11.5 Q0.5 8 2.5 5.5 Z" fill="#00f0f8" stroke="#006a78" stroke-width="1.2"/><path d="M3.5 10.5 L6.5 7.8" stroke="#708080" stroke-width="1.2"/><path d="M8.8 1.8 Q9.6 3 9.4 5 Q10.5 7 12.2 8.6" stroke="#fff" stroke-width=".9" fill="none"/></svg>
<div class="t" style="left:143px;top:296px;font-size:10.6px;letter-spacing:-0.05px;line-height:17px;color:#000">Dosing</div>
<svg style="left:122px;top:314px" width="16" height="16" viewBox="0 0 16 16"><path d="M4.5 2.5 Q5 0.5 7 0.7 L9 1 Q10.5 1.5 10.3 4.5 Q10.6 6 12.8 7.8 Q14.6 10 13.6 12.6 Q12.5 14.6 9.5 14.3 L5 14.5 Q1.2 14.5 0.8 11.5 Q0.5 8 2.5 5.5 Z" fill="#00f0f8" stroke="#006a78" stroke-width="1.2"/><path d="M3.5 10.5 L6.5 7.8" stroke="#708080" stroke-width="1.2"/><path d="M8.8 1.8 Q9.6 3 9.4 5 Q10.5 7 12.2 8.6" stroke="#fff" stroke-width=".9" fill="none"/></svg>
<div class="t" style="left:143px;top:315px;font-size:10.6px;letter-spacing:-0.05px;line-height:17px;color:#000">ShuttleValve</div>
<svg style="left:122px;top:333px" width="16" height="16" viewBox="0 0 16 16"><path d="M5 3 Q5 0.5 7.5 0.5 H9 Q11 1 11 4 Q15 6 15 10 Q15 14.5 10 14.5 H5 Q1 14.5 1 10 Q1 6 5 3Z" fill="#00e8f0" stroke="#006070" stroke-width="1.2"/><circle cx="5" cy="11" r="3.5" fill="#e8d000" stroke="#555" stroke-dasharray="1.5 1"/></svg>
<div class="t" style="left:143px;top:334px;font-size:10.6px;letter-spacing:-0.05px;line-height:17px;color:#000">CNC settings</div>
<svg style="left:122px;top:352px" width="16" height="16" viewBox="0 0 16 16"><path d="M4 3 Q4 0.5 6.5 0.5 H8.5 Q10 1 10 4 Q14 6 14 10 Q14 14.5 9 14.5 H5 Q1 14.5 1 10 Q1 6 4 3Z" fill="#00e8f0" stroke="#006070" stroke-width="1.2"/><path d="M3 12 L11 3" stroke="#e00" stroke-width="1.4"/><text x="11" y="6" font-size="7" font-family="Liberation Sans" font-weight="bold">G</text></svg>
<div class="t" style="left:143px;top:353px;font-size:10.6px;letter-spacing:-0.05px;line-height:17px;color:#000">Circle</div>
<svg style="left:122px;top:371px" width="16" height="16" viewBox="0 0 16 16"><path d="M4 3 Q4 0.5 6.5 0.5 H8.5 Q10 1 10 4 Q14 6 14 10 Q14 14.5 9 14.5 H5 Q1 14.5 1 10 Q1 6 4 3Z" fill="#00e8f0" stroke="#006070" stroke-width="1.2"/><path d="M3 12 L11 3" stroke="#e00" stroke-width="1.4"/><text x="11" y="6" font-size="7" font-family="Liberation Sans" font-weight="bold">G</text></svg>
<div class="t" style="left:143px;top:372px;font-size:10.6px;letter-spacing:-0.05px;line-height:17px;color:#000">CNC</div>
<svg style="left:122px;top:390px" width="16" height="16" viewBox="0 0 16 16"><circle cx="8" cy="8" r="7" fill="#3070e0"/><path d="M3 5 Q6 3 8 6 Q6 9 4 11 Q2 8 3 5Z M9 9 Q12 8 13 11 Q11 13 9 13Z" fill="#40c040"/><ellipse cx="6" cy="5" rx="3" ry="1.5" fill="#b0d8ff" opacity=".7"/></svg>
<div class="t" style="left:143px;top:391px;font-size:10.6px;letter-spacing:-0.05px;line-height:17px;color:#000">GVL</div>
<svg style="left:122px;top:409px" width="16" height="16" viewBox="0 0 16 16"><rect x="1" y="4" width="4" height="11" fill="#e00" stroke="#000"/><rect x="5" y="2" width="4" height="13" fill="#208020" stroke="#000"/><rect x="9" y="5" width="5" height="10" fill="#f0e000" stroke="#000"/><path d="M2 4 L5 1 L8 2" stroke="#000" fill="none"/></svg>
<div class="t" style="left:143px;top:410px;font-size:10.6px;letter-spacing:-0.05px;line-height:17px;color:#000"><span style="font-size:12px;letter-spacing:0">库管理器</span></div>
<svg style="left:122px;top:428px" width="16" height="16" viewBox="0 0 16 16"><path d="M1.5 0.5 H9.5 L12.5 3.5 V15.5 H1.5Z" fill="#fff" stroke="#888" stroke-width="1"/><path d="M12.5 3.5 V15.5 H1.5" stroke="#000" stroke-width="1.3" fill="none"/><path d="M9.5 0.5 V3.5 H12.5" stroke="#000" stroke-width=".8" fill="none"/><path d="M4 5.5 H10 M4 7.5 H10 M4 9.5 H10 M4 11.5 H10 M4 13.5 H10" stroke="#00f" stroke-width=".9"/></svg>
<div class="t" style="left:143px;top:429px;font-size:10.6px;letter-spacing:-0.05px;line-height:17px;color:#000">Calculate (PRG)</div>
<div class="ab" style="left:107px;top:450px;width:9px;height:9px;border:1px solid #a0d0d4;background:linear-gradient(#fff 40%,#d8d8d8);border-radius:1.5px"></div><div class="ab" style="left:109px;top:454px;width:5px;height:1.5px;background:#000"></div>
<svg style="left:122px;top:447px" width="16" height="16" viewBox="0 0 16 16"><path d="M1.5 0.5 H9.5 L12.5 3.5 V15.5 H1.5Z" fill="#fff" stroke="#888" stroke-width="1"/><path d="M12.5 3.5 V15.5 H1.5" stroke="#000" stroke-width="1.3" fill="none"/><path d="M9.5 0.5 V3.5 H12.5" stroke="#000" stroke-width=".8" fill="none"/><rect x="4.5" y="2.5" width="4" height="3" fill="none" stroke="#00f" stroke-width="1"/><path d="M6.5 5.5 V12.5 H9 M6.5 8.5 H9" stroke="#00f" stroke-width="1" fill="none"/><rect x="8.5" y="11" width="2.5" height="3" fill="#00f"/></svg>
<div class="t" style="left:143px;top:448px;font-size:10.6px;letter-spacing:-0.05px;line-height:17px;color:#000">SR_ATV (PRG)</div>
<svg style="left:143px;top:466px" width="16" height="16" viewBox="0 0 16 16"><path d="M0.5 0.5 H9.5 L12.5 3.5 V15.5 H0.5Z" fill="#fbfbf0" stroke="#888" stroke-width="1"/><path d="M12.5 3.5 V15.5 H0.5" stroke="#000" stroke-width="1.3" fill="none"/><path d="M9.5 0.5 V3.5 H12.5" stroke="#000" stroke-width=".8" fill="none"/><rect x="4.3" y="4.3" width="3" height="7" fill="#b0e0e8" stroke="#0000ff" stroke-width="1.4"/><path d="M2.8 7.5 V13.5 H9.8 V6.5 H7.3" stroke="#0000ff" stroke-width="1.4" fill="none"/><path d="M1.5 6 H4 M1.5 8 H4 M1.5 10 H3" stroke="#0000ff" stroke-width=".9"/></svg>
<div class="t" style="left:163px;top:467px;font-size:10.6px;letter-spacing:-0.05px;line-height:17px;color:#000">ATV_active</div>
<div class="ab" style="left:107px;top:488px;width:9px;height:9px;border:1px solid #a0d0d4;background:linear-gradient(#fff 40%,#d8d8d8);border-radius:1.5px"></div><div class="ab" style="left:109px;top:492px;width:5px;height:1.5px;background:#000"></div>
<svg style="left:122px;top:485px" width="16" height="16" viewBox="0 0 16 16"><path d="M1.5 0.5 H9.5 L12.5 3.5 V15.5 H1.5Z" fill="#fff" stroke="#888" stroke-width="1"/><path d="M12.5 3.5 V15.5 H1.5" stroke="#000" stroke-width="1.3" fill="none"/><path d="M9.5 0.5 V3.5 H12.5" stroke="#000" stroke-width=".8" fill="none"/><rect x="4.5" y="2.5" width="4" height="3" fill="none" stroke="#00f" stroke-width="1"/><path d="M6.5 5.5 V12.5 H9 M6.5 8.5 H9" stroke="#00f" stroke-width="1" fill="none"/><rect x="8.5" y="11" width="2.5" height="3" fill="#00f"/></svg>
<div class="t" style="left:143px;top:486px;font-size:10.6px;letter-spacing:-0.05px;line-height:17px;color:#000">SR_Motion (PRG)</div>
<svg style="left:143px;top:504px" width="16" height="16" viewBox="0 0 16 16"><path d="M0.5 0.5 H9.5 L12.5 3.5 V15.5 H0.5Z" fill="#fbfbf0" stroke="#888" stroke-width="1"/><path d="M12.5 3.5 V15.5 H0.5" stroke="#000" stroke-width="1.3" fill="none"/><path d="M9.5 0.5 V3.5 H12.5" stroke="#000" stroke-width=".8" fill="none"/><rect x="4.3" y="4.3" width="3" height="7" fill="#b0e0e8" stroke="#0000ff" stroke-width="1.4"/><path d="M2.8 7.5 V13.5 H9.8 V6.5 H7.3" stroke="#0000ff" stroke-width="1.4" fill="none"/><path d="M1.5 6 H4 M1.5 8 H4 M1.5 10 H3" stroke="#0000ff" stroke-width=".9"/></svg>
<div class="t" style="left:163px;top:505px;font-size:10.6px;letter-spacing:-0.05px;line-height:17px;color:#000">Basic_motion_active</div>
<svg style="left:143px;top:523px" width="16" height="16" viewBox="0 0 16 16"><path d="M0.5 0.5 H9.5 L12.5 3.5 V15.5 H0.5Z" fill="#fbfbf0" stroke="#888" stroke-width="1"/><path d="M12.5 3.5 V15.5 H0.5" stroke="#000" stroke-width="1.3" fill="none"/><path d="M9.5 0.5 V3.5 H12.5" stroke="#000" stroke-width=".8" fill="none"/><rect x="4.3" y="4.3" width="3" height="7" fill="#b0e0e8" stroke="#0000ff" stroke-width="1.4"/><path d="M2.8 7.5 V13.5 H9.8 V6.5 H7.3" stroke="#0000ff" stroke-width="1.4" fill="none"/><path d="M1.5 6 H4 M1.5 8 H4 M1.5 10 H3" stroke="#0000ff" stroke-width=".9"/></svg>
<div class="t" style="left:163px;top:524px;font-size:10.6px;letter-spacing:-0.05px;line-height:17px;color:#000">Cam_motion_active</div>
<svg style="left:143px;top:542px" width="16" height="16" viewBox="0 0 16 16"><path d="M0.5 0.5 H9.5 L12.5 3.5 V15.5 H0.5Z" fill="#fbfbf0" stroke="#888" stroke-width="1"/><path d="M12.5 3.5 V15.5 H0.5" stroke="#000" stroke-width="1.3" fill="none"/><path d="M9.5 0.5 V3.5 H12.5" stroke="#000" stroke-width=".8" fill="none"/><rect x="4.3" y="4.3" width="3" height="7" fill="#b0e0e8" stroke="#0000ff" stroke-width="1.4"/><path d="M2.8 7.5 V13.5 H9.8 V6.5 H7.3" stroke="#0000ff" stroke-width="1.4" fill="none"/><path d="M1.5 6 H4 M1.5 8 H4 M1.5 10 H3" stroke="#0000ff" stroke-width=".9"/></svg>
<div class="t" style="left:163px;top:543px;font-size:10.6px;letter-spacing:-0.05px;line-height:17px;color:#000">CNC_Robotic_active</div>
<svg style="left:143px;top:561px" width="16" height="16" viewBox="0 0 16 16"><path d="M0.5 0.5 H9.5 L12.5 3.5 V15.5 H0.5Z" fill="#fbfbf0" stroke="#888" stroke-width="1"/><path d="M12.5 3.5 V15.5 H0.5" stroke="#000" stroke-width="1.3" fill="none"/><path d="M9.5 0.5 V3.5 H12.5" stroke="#000" stroke-width=".8" fill="none"/><rect x="4.3" y="4.3" width="3" height="7" fill="#b0e0e8" stroke="#0000ff" stroke-width="1.4"/><path d="M2.8 7.5 V13.5 H9.8 V6.5 H7.3" stroke="#0000ff" stroke-width="1.4" fill="none"/><path d="M1.5 6 H4 M1.5 8 H4 M1.5 10 H3" stroke="#0000ff" stroke-width=".9"/></svg>
<div class="t" style="left:163px;top:562px;font-size:10.6px;letter-spacing:-0.05px;line-height:17px;color:#000">Communication_active</div>
<svg style="left:143px;top:580px" width="16" height="16" viewBox="0 0 16 16"><path d="M0.5 0.5 H9.5 L12.5 3.5 V15.5 H0.5Z" fill="#fff" stroke="#888" stroke-width="1"/><path d="M12.5 3.5 V15.5 H0.5" stroke="#000" stroke-width="1.3" fill="none"/><path d="M2.5 4.5 H8 M2.5 6.5 H8 M2.5 8.5 H7 M2.5 10.5 H6" stroke="#00f" stroke-width=".9"/><path d="M6 16 L9.5 7 L13 16 M7.3 13 H11.7" stroke="#008000" stroke-width="1.8" fill="none"/></svg>
<div class="t" style="left:163px;top:581px;font-size:10.6px;letter-spacing:-0.05px;line-height:17px;color:#000">logic_active</div>
<svg style="left:143px;top:599px" width="16" height="16" viewBox="0 0 16 16"><path d="M0.5 0.5 H9.5 L12.5 3.5 V15.5 H0.5Z" fill="#fbfbf0" stroke="#888" stroke-width="1"/><path d="M12.5 3.5 V15.5 H0.5" stroke="#000" stroke-width="1.3" fill="none"/><path d="M9.5 0.5 V3.5 H12.5" stroke="#000" stroke-width=".8" fill="none"/><rect x="4.3" y="4.3" width="3" height="7" fill="#b0e0e8" stroke="#0000ff" stroke-width="1.4"/><path d="M2.8 7.5 V13.5 H9.8 V6.5 H7.3" stroke="#0000ff" stroke-width="1.4" fill="none"/><path d="M1.5 6 H4 M1.5 8 H4 M1.5 10 H3" stroke="#0000ff" stroke-width=".9"/></svg>
<div class="t" style="left:163px;top:600px;font-size:10.6px;letter-spacing:-0.05px;line-height:17px;color:#000">power_on_active</div>
<svg style="left:143px;top:618px" width="16" height="16" viewBox="0 0 16 16"><path d="M0.5 0.5 H9.5 L12.5 3.5 V15.5 H0.5Z" fill="#fbfbf0" stroke="#888" stroke-width="1"/><path d="M12.5 3.5 V15.5 H0.5" stroke="#000" stroke-width="1.3" fill="none"/><path d="M9.5 0.5 V3.5 H12.5" stroke="#000" stroke-width=".8" fill="none"/><rect x="4.3" y="4.3" width="3" height="7" fill="#b0e0e8" stroke="#0000ff" stroke-width="1.4"/><path d="M2.8 7.5 V13.5 H9.8 V6.5 H7.3" stroke="#0000ff" stroke-width="1.4" fill="none"/><path d="M1.5 6 H4 M1.5 8 H4 M1.5 10 H3" stroke="#0000ff" stroke-width=".9"/></svg>
<div class="t" style="left:163px;top:619px;font-size:10.6px;letter-spacing:-0.05px;line-height:17px;color:#000">Reception_active</div>
<div class="ab" style="left:107px;top:640px;width:9px;height:9px;border:1px solid #a0d0d4;background:linear-gradient(#fff 40%,#d8d8d8);border-radius:1.5px"></div><div class="ab" style="left:109px;top:644px;width:5px;height:1.5px;background:#000"></div>
<svg style="left:122px;top:637px" width="16" height="16" viewBox="0 0 16 16"><path d="M1 3 L3 1 H17 V14 L15 16 H1Z" fill="#c8c8c8" stroke="#000" stroke-width=".8"/><rect x="1.5" y="3.5" width="4.5" height="12" fill="#e8e8e8" stroke="#555" stroke-width=".6"/><rect x="6.5" y="3.5" width="4" height="12" fill="#ddd" stroke="#555" stroke-width=".6"/><rect x="11" y="3.5" width="4" height="12" fill="#ddd" stroke="#555" stroke-width=".6"/><rect x="2.5" y="5" width="2" height="1.5" fill="#0c0"/><rect x="7.5" y="5" width="2" height="1" fill="#c00"/><rect x="12" y="5" width="2" height="1" fill="#c00"/><circle cx="11" cy="11" r="3.6" fill="#ffee00" stroke="#000" stroke-width="1.2" stroke-dasharray="1.6 1"/><circle cx="11" cy="11" r="1.2" fill="#fff"/></svg>
<div class="t" style="left:143px;top:638px;font-size:10.6px;letter-spacing:-0.05px;line-height:17px;color:#000"><span style="font-size:12px;letter-spacing:0">任务配置</span></div>
<div class="ab" style="left:127px;top:659px;width:9px;height:9px;border:1px solid #a0d0d4;background:linear-gradient(#fff 40%,#d8d8d8);border-radius:1.5px"></div><div class="ab" style="left:129px;top:663px;width:5px;height:1.5px;background:#000"></div>
<svg style="left:143px;top:656px" width="16" height="16" viewBox="0 0 16 16"><path d="M1 11 L8 7.5 L15 11 L8 14.5Z" fill="#fff" stroke="#000"/><path d="M1 8.5 L8 5 L15 8.5 L8 12Z" fill="#fff" stroke="#000"/><path d="M1 6 L8 2.5 L15 6 L8 9.5Z" fill="#fff" stroke="#000"/><path d="M8 0 V6 M5.5 3.5 L8 6.5 L10.5 3.5" stroke="#0030a0" stroke-width="1.8" fill="none"/></svg>
<div class="t" style="left:163px;top:657px;font-size:10.6px;letter-spacing:-0.05px;line-height:17px;color:#000">MAST</div>
<svg style="left:162px;top:675px" width="16" height="16" viewBox="0 0 16 16"><path d="M2.5 0.5 H9.5 L12.5 3.5 V14.5 H2.5Z" fill="#fff" stroke="#888" stroke-width="1"/><path d="M12.5 3.5 V14.5 H2.5" stroke="#000" stroke-width="1.3" fill="none"/><path d="M9.5 0.5 V3.5 H12.5" stroke="#000" stroke-width=".8" fill="none"/><path d="M9.5 5.5 H11.5 M9.5 7.5 H11.5 M9.5 9.5 H11.5 M5 11.5 H11.5" stroke="#999" stroke-width=".8"/><rect x="4.8" y="2.5" width="4" height="4" fill="none" stroke="#8b0000" stroke-width="1.2"/><path d="M8.8 6.5 V10.5 H4.8" stroke="#00008b" stroke-width="1.2" fill="none"/><rect x="0.8" y="6.5" width="4" height="4" fill="none" stroke="#008000" stroke-width="1.2"/></svg>
<div class="t" style="left:183px;top:676px;font-size:10.6px;letter-spacing:-0.05px;line-height:17px;color:#000">SR_ATV</div>
<svg style="left:162px;top:694px" width="16" height="16" viewBox="0 0 16 16"><path d="M2.5 0.5 H9.5 L12.5 3.5 V14.5 H2.5Z" fill="#fff" stroke="#888" stroke-width="1"/><path d="M12.5 3.5 V14.5 H2.5" stroke="#000" stroke-width="1.3" fill="none"/><path d="M9.5 0.5 V3.5 H12.5" stroke="#000" stroke-width=".8" fill="none"/><path d="M9.5 5.5 H11.5 M9.5 7.5 H11.5 M9.5 9.5 H11.5 M5 11.5 H11.5" stroke="#999" stroke-width=".8"/><rect x="4.8" y="2.5" width="4" height="4" fill="none" stroke="#8b0000" stroke-width="1.2"/><path d="M8.8 6.5 V10.5 H4.8" stroke="#00008b" stroke-width="1.2" fill="none"/><rect x="0.8" y="6.5" width="4" height="4" fill="none" stroke="#008000" stroke-width="1.2"/></svg>
<div class="t" style="left:183px;top:695px;font-size:10.6px;letter-spacing:-0.05px;line-height:17px;color:#000">Calculate</div>
<div class="ab" style="left:127px;top:716px;width:9px;height:9px;border:1px solid #a0d0d4;background:linear-gradient(#fff 40%,#d8d8d8);border-radius:1.5px"></div><div class="ab" style="left:129px;top:720px;width:5px;height:1.5px;background:#000"></div>
<svg style="left:143px;top:713px" width="16" height="16" viewBox="0 0 16 16"><path d="M1 11 L8 7.5 L15 11 L8 14.5Z" fill="#fff" stroke="#000"/><path d="M1 8.5 L8 5 L15 8.5 L8 12Z" fill="#fff" stroke="#000"/><path d="M1 6 L8 2.5 L15 6 L8 9.5Z" fill="#fff" stroke="#000"/><path d="M8 0 V6 M5.5 3.5 L8 6.5 L10.5 3.5" stroke="#0030a0" stroke-width="1.8" fill="none"/></svg>
<div class="t" style="left:163px;top:714px;font-size:10.6px;letter-spacing:-0.05px;line-height:17px;color:#000">Motion</div>
<svg style="left:162px;top:732px" width="16" height="16" viewBox="0 0 16 16"><path d="M2.5 0.5 H9.5 L12.5 3.5 V14.5 H2.5Z" fill="#fff" stroke="#888" stroke-width="1"/><path d="M12.5 3.5 V14.5 H2.5" stroke="#000" stroke-width="1.3" fill="none"/><path d="M9.5 0.5 V3.5 H12.5" stroke="#000" stroke-width=".8" fill="none"/><path d="M9.5 5.5 H11.5 M9.5 7.5 H11.5 M9.5 9.5 H11.5 M5 11.5 H11.5" stroke="#999" stroke-width=".8"/><rect x="4.8" y="2.5" width="4" height="4" fill="none" stroke="#8b0000" stroke-width="1.2"/><path d="M8.8 6.5 V10.5 H4.8" stroke="#00008b" stroke-width="1.2" fill="none"/><rect x="0.8" y="6.5" width="4" height="4" fill="none" stroke="#008000" stroke-width="1.2"/></svg>
<div class="t" style="left:183px;top:733px;font-size:10.6px;letter-spacing:-0.05px;line-height:17px;color:#000">SR_Motion</div>
<div class="ab" style="left:127px;top:754px;width:9px;height:9px;border:1px solid #a0d0d4;background:linear-gradient(#fff 40%,#d8d8d8);border-radius:1.5px"></div><div class="ab" style="left:129px;top:758px;width:5px;height:1.5px;background:#000"></div>
<svg style="left:143px;top:751px" width="16" height="16" viewBox="0 0 16 16"><path d="M1 11 L8 7.5 L15 11 L8 14.5Z" fill="#fff" stroke="#000"/><path d="M1 8.5 L8 5 L15 8.5 L8 12Z" fill="#fff" stroke="#000"/><path d="M1 6 L8 2.5 L15 6 L8 9.5Z" fill="#fff" stroke="#000"/><path d="M8 0 V6 M5.5 3.5 L8 6.5 L10.5 3.5" stroke="#0030a0" stroke-width="1.8" fill="none"/></svg>
<div class="t" style="left:163px;top:752px;font-size:10.6px;letter-spacing:-0.05px;line-height:17px;color:#000">VISU_TASK</div>
<svg style="left:162px;top:770px" width="16" height="16" viewBox="0 0 16 16"><path d="M2.5 0.5 H9.5 L12.5 3.5 V14.5 H2.5Z" fill="#fff" stroke="#888" stroke-width="1"/><path d="M12.5 3.5 V14.5 H2.5" stroke="#000" stroke-width="1.3" fill="none"/><path d="M9.5 0.5 V3.5 H12.5" stroke="#000" stroke-width=".8" fill="none"/><path d="M9.5 5.5 H11.5 M9.5 7.5 H11.5 M9.5 9.5 H11.5 M5 11.5 H11.5" stroke="#999" stroke-width=".8"/><rect x="4.8" y="2.5" width="4" height="4" fill="none" stroke="#8b0000" stroke-width="1.2"/><path d="M8.8 6.5 V10.5 H4.8" stroke="#00008b" stroke-width="1.2" fill="none"/><rect x="0.8" y="6.5" width="4" height="4" fill="none" stroke="#008000" stroke-width="1.2"/></svg>
<div class="t" style="left:183px;top:771px;font-size:10.6px;letter-spacing:-0.05px;line-height:17px;color:#000">VisuElems.Visu_Prg</div>
<svg style="left:122px;top:789px" width="16" height="16" viewBox="0 0 16 16"><circle cx="6" cy="9" r="5" fill="#c0e0ff" stroke="#000" stroke-width="1.4"/><path d="M2.5 9 Q4 6 6 9 T9.5 9" stroke="#00f" fill="none"/><path d="M9.5 12 L13 15.5" stroke="#000" stroke-width="2"/><rect x="10" y="1" width="5" height="8" fill="#fff" stroke="#000"/><path d="M11 3 H14 M11 5 H14" stroke="#c00"/></svg>
<div class="t" style="left:143px;top:790px;font-size:10.6px;letter-spacing:-0.05px;line-height:17px;color:#000">Trace</div>
<svg style="left:122px;top:808px" width="16" height="16" viewBox="0 0 16 16"><circle cx="6" cy="9" r="5" fill="#c0e0ff" stroke="#000" stroke-width="1.4"/><path d="M2.5 9 Q4 6 6 9 T9.5 9" stroke="#00f" fill="none"/><path d="M9.5 12 L13 15.5" stroke="#000" stroke-width="2"/><rect x="10" y="1" width="5" height="8" fill="#fff" stroke="#000"/><path d="M11 3 H14 M11 5 H14" stroke="#c00"/></svg>
<div class="t" style="left:143px;top:809px;font-size:10.6px;letter-spacing:-0.05px;line-height:17px;color:#000">Trace_1</div>
<div class="ab" style="left:107px;top:830px;width:9px;height:9px;border:1px solid #a0d0d4;background:linear-gradient(#fff 40%,#d8d8d8);border-radius:1.5px"></div><div class="ab" style="left:109px;top:834px;width:5px;height:1.5px;background:#000"></div>
<svg style="left:122px;top:827px" width="16" height="16" viewBox="0 0 16 16"><path d="M2.5 0.5 H9.5 L12.5 3.5 V14.5 H2.5Z" fill="#fff" stroke="#888" stroke-width="1"/><path d="M12.5 3.5 V14.5 H2.5" stroke="#000" stroke-width="1.3" fill="none"/><rect x="0.5" y="5" width="10" height="10" fill="#8b0000"/><rect x="3" y="7" width="5" height="4" fill="#fff"/><rect x="4.8" y="1.5" width="4" height="4.5" fill="#fff" stroke="#c00" stroke-width="1.1"/><rect x="2" y="12" width="7" height="2" fill="#ff4040"/></svg>
<div class="t" style="left:143px;top:828px;font-size:10.6px;letter-spacing:-0.05px;line-height:17px;color:#000">Visualization Manager</div>
<svg style="left:143px;top:846px" width="16" height="16" viewBox="0 0 16 16"><circle cx="7" cy="8" r="6.5" fill="#3080e0"/><path d="M2 6 Q5 3 8 5 L6 10Z" fill="#40c040"/><rect x="8" y="6" width="4" height="4" fill="#f0d000" stroke="#000" stroke-width=".5"/><rect x="5" y="10" width="4" height="4" fill="#0a0" stroke="#000" stroke-width=".5"/><rect x="9" y="10" width="5" height="5" fill="#e00" stroke="#000" stroke-width=".5"/></svg>
<div class="t" style="left:163px;top:847px;font-size:10.6px;letter-spacing:-0.05px;line-height:17px;color:#000">WebVisualization</div>
<svg style="left:122px;top:865px" width="16" height="16" viewBox="0 0 16 16"><path d="M2.5 0.5 H9.5 L12.5 3.5 V14.5 H2.5Z" fill="#fff" stroke="#888" stroke-width="1"/><path d="M12.5 3.5 V14.5 H2.5" stroke="#000" stroke-width="1.3" fill="none"/><rect x="4.8" y="2.5" width="4" height="4" fill="#ffcc00" stroke="#c00" stroke-width="1.1"/><rect x="0.8" y="6.5" width="4" height="4" fill="#ffff00" stroke="#008000" stroke-width="1.1"/><rect x="4.8" y="6.5" width="4" height="4" fill="#ff2080" stroke="#00008b" stroke-width="1.1"/></svg>
<div class="t" style="left:143px;top:866px;font-size:10.6px;letter-spacing:-0.05px;line-height:17px;color:#000">HMI_Basic</div>
<svg style="left:184px;top:223px" width="14" height="20" viewBox="0 0 14 20"><path d="M0.5 0.5 V16 L4 12.5 L7 19 L9.5 18 L6.5 11.5 L11.5 11.5Z" fill="#fff" stroke="#000"/></svg>
<div class="ab" style="left:356px;top:99px;width:1427px;height:779px;background:#fff;border-left:1px solid #a0a0a0;border-top:1px solid #a0a0a0"></div>
<div class="ab" style="left:357px;top:100px;width:1426px;height:21px;background:#f0f0f0"></div>
<div class="ab" style="left:357px;top:120px;width:1426px;height:8px;background:#efefef"></div>
<div class="ab" style="left:357px;top:119px;width:1426px;height:1px;background:#a0a0a0"></div>
<svg style="left:612px;top:101px" width="95" height="20" viewBox="0 0 95 20"><path d="M0.5 19.5 L8.5 2.5 Q10 1.5 12 1.5 H90.5 Q92.5 1.5 92.5 4.5 V19.5" fill="#f2f2f2" stroke="#a8a8a8"/></svg>
<svg style="left:620px;top:104px" width="15" height="16" viewBox="0 0 16 16"><path d="M4 3 Q4 0.5 6.5 0.5 H8.5 Q10 1 10 4 Q14 6 14 10 Q14 14.5 9 14.5 H5 Q1 14.5 1 10 Q1 6 4 3Z" fill="#00e8f0" stroke="#006070" stroke-width="1.2"/><path d="M4 10 L7 7.5" stroke="#888" stroke-width="1.2"/></svg>
<div class="t" style="left:644px;top:103px;font-size:11px;line-height:16px;letter-spacing:0.1px;color:#000">CupLift</div>
<svg style="left:704px;top:101px" width="87" height="20" viewBox="0 0 87 20"><path d="M0.5 19.5 L8.5 2.5 Q10 1.5 12 1.5 H82.5 Q84.5 1.5 84.5 4.5 V19.5" fill="#f2f2f2" stroke="#a8a8a8"/></svg>
<svg style="left:713px;top:104px" width="16" height="16" viewBox="0 0 16 16"><circle cx="6" cy="9" r="4.5" fill="#c0e0ff" stroke="#000" stroke-width="1.4"/><path d="M3 9 Q4.5 6 6 9 T9 9" stroke="#00f" fill="none"/><path d="M9 12 L12 15" stroke="#000" stroke-width="2"/><rect x="10" y="3" width="5" height="7" fill="#ccc" stroke="#000" stroke-width=".8"/><circle cx="12.5" cy="2.5" r="1.8" fill="#fff" stroke="#000" stroke-width=".8"/><path d="M11 7 H13" stroke="#e00"/></svg>
<div class="t" style="left:736px;top:103px;font-size:11px;line-height:16px;letter-spacing:0.1px;color:#000">Trace</div>
<svg style="left:488px;top:101px" width="127" height="20" viewBox="0 0 127 20"><path d="M0.5 19.5 L8.5 2.5 Q10 1.5 12 1.5 H122.5 Q124.5 1.5 124.5 4.5 V19.5" fill="#f2f2f2" stroke="#a8a8a8"/></svg>
<svg style="left:497px;top:104px" width="14" height="16" viewBox="0 0 14 16"><path d="M1 3 L4 1 H13 V13 L10 15 H1Z" fill="#bbb" stroke="#333" stroke-width=".8"/><rect x="1.5" y="3.5" width="4" height="11" fill="#ddd" stroke="#555" stroke-width=".6"/><rect x="6" y="3.5" width="4" height="11" fill="#ddd" stroke="#555" stroke-width=".6"/><rect x="2.5" y="5" width="2" height="1" fill="#0c0"/><rect x="7" y="5" width="2" height="1" fill="#c00"/></svg>
<div class="t" style="left:523px;top:103px;font-size:11px;line-height:16px;letter-spacing:0.1px;color:#000">MyController</div>
<svg style="left:358px;top:101px" width="133" height="20" viewBox="0 0 133 20"><path d="M0.5 19.5 L16.5 2.5 Q18 1.5 20 1.5 H128.5 Q130.5 1.5 130.5 4.5 V19.5" fill="#fff" stroke="#a8a8a8"/></svg>
<svg style="left:376px;top:104px" width="16" height="16" viewBox="0 0 16 16"><path d="M2.5 0.5 H9.5 L12.5 3.5 V14.5 H2.5Z" fill="#fff" stroke="#888" stroke-width="1"/><path d="M12.5 3.5 V14.5 H2.5" stroke="#000" stroke-width="1.3" fill="none"/><path d="M9.5 0.5 V3.5 H12.5" stroke="#000" stroke-width=".8" fill="none"/><path d="M9.5 5.5 H11.5 M9.5 7.5 H11.5 M9.5 9.5 H11.5 M5 11.5 H11.5" stroke="#999" stroke-width=".8"/><rect x="4.8" y="2.5" width="4" height="4" fill="#ffdd30" stroke="#b00000" stroke-width="1.1"/><rect x="4.8" y="6.5" width="4" height="4" fill="#ff3080" stroke="#0000a0" stroke-width="1.1"/><rect x="0.8" y="6.5" width="4" height="4" fill="#ffff40" stroke="#008000" stroke-width="1.1"/></svg>
<div class="t" style="left:399px;top:103px;font-size:11px;line-height:16px;font-weight:bold;letter-spacing:0.45px;color:#000">HMI_dosing</div>
<svg style="left:475px;top:107px" width="9" height="9" viewBox="0 0 9 9"><path d="M1 1 L8 8 M8 1 L1 8" stroke="#000" stroke-width="2"/></svg>
<svg style="left:1106px;top:121px" width="24" height="8" viewBox="0 0 24 8"><path d="M0.5 6.5 L4.5 2.5 L8.5 6.5Z" fill="#fff" stroke="#888"/><path d="M16.5 2.5 H24.5 L20.5 6.5Z" fill="#999" stroke="#555"/></svg>
<svg style="left:0;top:0" width="1783" height="878"><rect x="598" y="415" width="11" height="47" fill="#ffff80"/><path d="M487.5 238.5 H617.5 V373.5 L577.5 413.5 V416 M577.5 419 V428.5 H597.5 M487.5 238.5 V373.5 L527.5 413.5 V424" fill="none" stroke="#000" stroke-width="1"/><path d="M597.5 428.5 V413.5 H672.5 V463.5 H597.5 V448.5 H577.5 V454" fill="none" stroke="#000" stroke-width="1"/><rect x="427" y="433" width="101" height="11" fill="#ffff80"/><rect x="609" y="433" width="80" height="11" fill="#ffff80"/><rect x="528" y="414" width="15" height="53" fill="#ffff80"/><path d="M543 414 H545 V416 L547 417.5 H552 L553 419 H577 V421 H575 V432 H557 Q547 436 544 452 V467 H543 Z" fill="#ffff80"/><path d="M561 414 H577 V416 H567 L565 415 Z" fill="#ffff80"/><path d="M564 456 Q564 452 567 450 H575 V467 H564 Z" fill="#ffff80"/><path d="M500.5 475.5 H597.5 L587.5 502.5 H510.5 Z" fill="none" stroke="#000"/><rect x="499" y="508" width="121" height="19" fill="#ffff80"/><rect x="549" y="527" width="21" height="44" fill="#ffff80"/><rect x="499" y="600" width="121" height="19" fill="#f0f0f0"/><rect x="549" y="619" width="21" height="43" fill="#f0f0f0"/><line x1="498.5" y1="561" x2="498.5" y2="596" stroke="#000"/><line x1="678.5" y1="561" x2="678.5" y2="596" stroke="#000"/><line x1="858.5" y1="561" x2="858.5" y2="596" stroke="#000"/><line x1="1038.5" y1="561" x2="1038.5" y2="596" stroke="#000"/><path d="M680.5 566.5 H777.5 L767.5 593.5 H690.5 Z" fill="none" stroke="#000"/><path d="M860.5 566.5 H957.5 L947.5 593.5 H870.5 Z" fill="none" stroke="#000"/><line x1="402" y1="596.5" x2="1166" y2="596.5" stroke="#000" stroke-width="2"/><line x1="402" y1="664.5" x2="1166" y2="664.5" stroke="#000" stroke-width="2"/><line x1="688" y1="600.5" x2="849" y2="600.5" stroke="#000"/><path d="M678.5 600.5 L688.5 596.5 V604.5 Z M858.5 600.5 L848.5 596.5 V604.5 Z" fill="#fff" stroke="#000"/><circle cx="402.5" cy="630.5" r="34" fill="#0080ff" stroke="#000"/><circle cx="402.5" cy="630.5" r="10" fill="#fff" stroke="#000"/><rect x="400" y="641" width="4" height="23" fill="#ffff80"/><circle cx="1166" cy="630.5" r="34.5" fill="#0080ff" stroke="#000"/><circle cx="1166" cy="630.5" r="10" fill="#fff" stroke="#000"/><rect x="1163" y="637" width="6" height="27" fill="#ffff00"/><path d="M1004 551 H1013 V561 L1008.5 566 L1004 561 Z" fill="#ff0000"/><rect x="368.5" y="675.5" width="830" height="70" fill="#c0c0c0" stroke="#000"/><rect x="762.5" y="178.5" width="390" height="255" rx="28" fill="#fff" stroke="#000"/><rect x="777" y="193" width="96" height="51" rx="6" fill="#ffff80"/><rect x="887" y="193" width="251" height="51" rx="6" fill="#c0c0c0"/><rect x="777" y="250" width="96" height="50" rx="6" fill="#ffff80"/><rect x="887" y="250" width="251" height="50" rx="6" fill="#c0c0c0"/><rect x="777" y="308" width="96" height="50" rx="6" fill="#ffff80"/><rect x="887" y="308" width="251" height="50" rx="6" fill="#c0c0c0"/><rect x="777" y="368" width="96" height="50" rx="6" fill="#ffff80"/><rect x="887" y="368" width="251" height="50" rx="6" fill="#c0c0c0"/><line x1="893.5" y1="206" x2="893.5" y2="212" stroke="#000"/><line x1="930.5" y1="206" x2="930.5" y2="212" stroke="#000"/><line x1="967.5" y1="206" x2="967.5" y2="212" stroke="#000"/><line x1="1004.5" y1="206" x2="1004.5" y2="212" stroke="#000"/><line x1="1041.5" y1="198" x2="1041.5" y2="212" stroke="#000"/><line x1="1078.5" y1="198" x2="1078.5" y2="212" stroke="#000"/><line x1="1115.5" y1="198" x2="1115.5" y2="212" stroke="#000"/><line x1="893.5" y1="262" x2="893.5" y2="269" stroke="#000"/><line x1="930.5" y1="262" x2="930.5" y2="269" stroke="#000"/><line x1="967.5" y1="262" x2="967.5" y2="269" stroke="#000"/><line x1="1004.5" y1="262" x2="1004.5" y2="269" stroke="#000"/><line x1="1041.5" y1="262" x2="1041.5" y2="269" stroke="#000"/><line x1="1078.5" y1="262" x2="1078.5" y2="269" stroke="#000"/><line x1="1115.5" y1="262" x2="1115.5" y2="269" stroke="#000"/><rect x="893" y="261" width="112" height="4" fill="#1e90ff"/><line x1="893.5" y1="321" x2="893.5" y2="328" stroke="#000"/><line x1="930.5" y1="321" x2="930.5" y2="328" stroke="#000"/><line x1="967.5" y1="321" x2="967.5" y2="328" stroke="#000"/><line x1="1004.5" y1="321" x2="1004.5" y2="328" stroke="#000"/><line x1="1041.5" y1="321" x2="1041.5" y2="328" stroke="#000"/><line x1="1078.5" y1="321" x2="1078.5" y2="328" stroke="#000"/><line x1="1115.5" y1="321" x2="1115.5" y2="328" stroke="#000"/><rect x="893" y="320" width="112" height="5" fill="#1e90ff"/><line x1="896.5" y1="381" x2="896.5" y2="388" stroke="#000"/><line x1="933.5" y1="381" x2="933.5" y2="388" stroke="#000"/><line x1="970.5" y1="381" x2="970.5" y2="388" stroke="#000"/><line x1="1007.5" y1="381" x2="1007.5" y2="388" stroke="#000"/><line x1="1044.5" y1="381" x2="1044.5" y2="388" stroke="#000"/><line x1="1081.5" y1="381" x2="1081.5" y2="388" stroke="#000"/><line x1="1118.5" y1="381" x2="1118.5" y2="388" stroke="#000"/><rect x="896" y="381" width="112" height="3" fill="#1e90ff"/><circle cx="1638" cy="596" r="60.5" fill="#c0c0c0" stroke="#000"/><path d="M1578.7 587.5 L1638.9 585.3 L1636.7 605.8 Z" fill="#0000ff" stroke="#000" stroke-width="0.8"/><rect x="1522.5" y="667.5" width="249" height="37" rx="4" fill="#ffff00" stroke="#000"/></svg>
<div class="ab" style="left:382px;top:373px;width:96px;height:51px;display:flex;align-items:center;justify-content:center;font-size:12px;background:#ffff80;border-radius:7px;padding-bottom:4px">阀门</div>
<div class="ab" style="left:632px;top:358px;width:96px;height:51px;display:flex;align-items:center;justify-content:center;font-size:12px;background:#ffff80;border-radius:7px;padding-bottom:4px">罐装</div>
<div class="ab" style="left:629px;top:609px;width:96px;height:49px;display:flex;align-items:center;justify-content:center;font-size:12px;background:#ffff80;border-radius:7px;padding-bottom:4px">升降</div>
<div class="ab" style="left:1013px;top:600px;width:96px;height:51px;display:flex;align-items:center;justify-content:center;font-size:12px;background:#ffff80;border-radius:7px;padding-bottom:4px">馈送</div>
<div class="ab" style="left:941px;top:500px;width:96px;height:51px;background:#ffff80;border-radius:7px"></div>
<div class="t" style="left:941px;top:509px;width:96px;text-align:center;font-size:12px;line-height:14px">"鄌"<br>繩</div>
<div class="t" style="left:756px;top:605px;font-size:12px;letter-spacing:0.2px;color:#000030;line-height:15px">1 Periode</div>
<div class="t" style="left:379px;top:703px;font-size:13px;font-weight:bold;line-height:15px">Master</div>
<div class="ab" style="left:777px;top:193px;width:96px;height:51px;display:flex;align-items:center;justify-content:center;font-size:12px;letter-spacing:0.25px">ShuttleValve</div>
<div class="ab" style="left:777px;top:250px;width:96px;height:50px;display:flex;align-items:center;justify-content:center;font-size:12px;letter-spacing:0.25px">DosingPiston</div>
<div class="ab" style="left:777px;top:308px;width:96px;height:50px;display:flex;align-items:center;justify-content:center;font-size:12px;letter-spacing:0.25px">CupTransport</div>
<div class="ab" style="left:777px;top:368px;width:96px;height:50px;display:flex;align-items:center;justify-content:center;font-size:12px;letter-spacing:0.25px">CupLift</div>
<div class="t" style="left:873.5px;top:213px;width:40px;text-align:center;font-size:12px;font-weight:bold;line-height:16px">0</div>
<div class="t" style="left:910.5px;top:213px;width:40px;text-align:center;font-size:12px;font-weight:bold;line-height:16px">60</div>
<div class="t" style="left:947.5px;top:213px;width:40px;text-align:center;font-size:12px;font-weight:bold;line-height:16px">120</div>
<div class="t" style="left:984.5px;top:213px;width:40px;text-align:center;font-size:12px;font-weight:bold;line-height:16px">180</div>
<div class="t" style="left:1021.5px;top:213px;width:40px;text-align:center;font-size:12px;font-weight:bold;line-height:16px">240</div>
<div class="t" style="left:1058.5px;top:213px;width:40px;text-align:center;font-size:12px;font-weight:bold;line-height:16px">300</div>
<div class="t" style="left:1095.5px;top:213px;width:40px;text-align:center;font-size:12px;font-weight:bold;line-height:16px">360</div>
<div class="t" style="left:873.5px;top:270.5px;width:40px;text-align:center;font-size:12px;font-weight:bold;line-height:16px">0</div>
<div class="t" style="left:910.5px;top:270.5px;width:40px;text-align:center;font-size:12px;font-weight:bold;line-height:16px">60</div>
<div class="t" style="left:947.5px;top:270.5px;width:40px;text-align:center;font-size:12px;font-weight:bold;line-height:16px">120</div>
<div class="t" style="left:984.5px;top:270.5px;width:40px;text-align:center;font-size:12px;font-weight:bold;line-height:16px">180</div>
<div class="t" style="left:1021.5px;top:270.5px;width:40px;text-align:center;font-size:12px;font-weight:bold;line-height:16px">240</div>
<div class="t" style="left:1058.5px;top:270.5px;width:40px;text-align:center;font-size:12px;font-weight:bold;line-height:16px">300</div>
<div class="t" style="left:1095.5px;top:270.5px;width:40px;text-align:center;font-size:12px;font-weight:bold;line-height:16px">360</div>
<div class="t" style="left:873.5px;top:331.5px;width:40px;text-align:center;font-size:12px;font-weight:bold;line-height:16px">0</div>
<div class="t" style="left:910.5px;top:331.5px;width:40px;text-align:center;font-size:12px;font-weight:bold;line-height:16px">60</div>
<div class="t" style="left:947.5px;top:331.5px;width:40px;text-align:center;font-size:12px;font-weight:bold;line-height:16px">120</div>
<div class="t" style="left:984.5px;top:331.5px;width:40px;text-align:center;font-size:12px;font-weight:bold;line-height:16px">180</div>
<div class="t" style="left:1021.5px;top:331.5px;width:40px;text-align:center;font-size:12px;font-weight:bold;line-height:16px">240</div>
<div class="t" style="left:1058.5px;top:331.5px;width:40px;text-align:center;font-size:12px;font-weight:bold;line-height:16px">300</div>
<div class="t" style="left:1095.5px;top:331.5px;width:40px;text-align:center;font-size:12px;font-weight:bold;line-height:16px">360</div>
<div class="t" style="left:876.5px;top:390.5px;width:40px;text-align:center;font-size:12px;font-weight:bold;line-height:16px">0</div>
<div class="t" style="left:913.5px;top:390.5px;width:40px;text-align:center;font-size:12px;font-weight:bold;line-height:16px">60</div>
<div class="t" style="left:950.5px;top:390.5px;width:40px;text-align:center;font-size:12px;font-weight:bold;line-height:16px">120</div>
<div class="t" style="left:987.5px;top:390.5px;width:40px;text-align:center;font-size:12px;font-weight:bold;line-height:16px">180</div>
<div class="t" style="left:1024.5px;top:390.5px;width:40px;text-align:center;font-size:12px;font-weight:bold;line-height:16px">240</div>
<div class="t" style="left:1061.5px;top:390.5px;width:40px;text-align:center;font-size:12px;font-weight:bold;line-height:16px">300</div>
<div class="t" style="left:1098.5px;top:390.5px;width:40px;text-align:center;font-size:12px;font-weight:bold;line-height:16px">360</div>
<div class="ab" style="left:377px;top:797px;width:154px;height:35px;display:flex;align-items:center;justify-content:center;font-size:12px;background:#ff0;border:1px solid #000;border-radius:4px;letter-spacing:0.25px">Basic</div>
<div class="ab" style="left:531px;top:797px;width:154px;height:35px;display:flex;align-items:center;justify-content:center;font-size:12px;background:#ff0;border:1px solid #000;border-radius:4px;letter-spacing:0.25px">Cam</div>
<div class="ab" style="left:685px;top:797px;width:154px;height:35px;display:flex;align-items:center;justify-content:center;font-size:12px;background:#ff0;border:1px solid #000;border-radius:4px;letter-spacing:0.25px">CNC</div>
<div class="ab" style="left:376px;top:831px;width:154px;height:36px;display:flex;align-items:center;justify-content:center;font-size:12px;background:#ff0;border:1px solid #000;border-radius:4px;letter-spacing:0.25px">Reset</div>
<div class="ab" style="left:530px;top:831px;width:155px;height:36px;display:flex;align-items:center;justify-content:center;font-size:12px;background:#ff0;border:1px solid #000;border-radius:4px;letter-spacing:0.25px">Power</div>
<div class="ab" style="left:685px;top:831px;width:155px;height:36px;display:flex;align-items:center;justify-content:center;font-size:12px;background:#ff0;border:1px solid #000;border-radius:4px;letter-spacing:0.25px">IDN</div>
<div class="ab" style="left:1522px;top:667px;width:250px;height:38px;display:flex;align-items:center;justify-content:center;font-size:13px;letter-spacing:0.2px">Master</div><div class="ab" style="left:1220px;top:217px;width:272px;height:262px;background:#c0c0c0;border:1px solid #000"></div>
<div class="t" style="left:1220px;top:216px;width:272px;text-align:center;font-size:24px;line-height:30px">MC_MoveVelocity</div>
<div class="ab" style="left:1230px;top:247px;width:252px;height:22px;background:#c0c0c0;border:1px solid #000;overflow:hidden;display:flex;align-items:center;justify-content:center;font-size:12px;letter-spacing:0.25px;color:#000;white-space:nowrap"><span style="letter-spacing:0">Instanz: SR_Motion.MC_MoveVelocity_Master</span></div>
<div class="ab" style="left:1230px;top:277px;width:122px;height:22px;background:#80ff00;border:1px solid #000;overflow:hidden;display:flex;align-items:center;justify-content:center;font-size:12px;letter-spacing:0.25px;color:#000;white-space:nowrap">Execute</div>
<div class="ab" style="left:1230px;top:307px;width:122px;height:22px;background:#fff;border:1px solid #000;overflow:hidden;display:flex;align-items:center;justify-content:center;font-size:12px;letter-spacing:0.25px;color:#000;white-space:nowrap">Velocity : 100.000000</div>
<div class="ab" style="left:1230px;top:337px;width:122px;height:22px;background:#fff;border:1px solid #000;overflow:hidden;display:flex;align-items:center;justify-content:center;font-size:12px;letter-spacing:0.25px;color:#000;white-space:nowrap">Acceleration : 1000.000000</div>
<div class="ab" style="left:1230px;top:367px;width:122px;height:22px;background:#fff;border:1px solid #000;overflow:hidden;display:flex;align-items:center;justify-content:center;font-size:12px;letter-spacing:0.25px;color:#000;white-space:nowrap">Deceleration: 1000.000000</div>
<div class="ab" style="left:1230px;top:397px;width:122px;height:22px;background:#fff;border:1px solid #000;overflow:hidden;display:flex;align-items:center;justify-content:center;font-size:12px;letter-spacing:0.25px;color:#000;white-space:nowrap">Jerk: 0.000000</div>
<div class="ab" style="left:1230px;top:427px;width:122px;height:22px;background:#fff;border:1px solid #000;overflow:hidden;display:flex;align-items:center;justify-content:center;font-size:12px;letter-spacing:0.25px;color:#000;white-space:nowrap">Direction: 2</div>
<div class="ab" style="left:1360px;top:277px;width:122px;height:22px;background:#80ff00;border:1px solid #000;overflow:hidden;display:flex;align-items:center;justify-content:center;font-size:12px;letter-spacing:0.25px;color:#000;white-space:nowrap">InVelocity</div>
<div class="ab" style="left:1360px;top:307px;width:122px;height:22px;background:#0000ff;border:1px solid #000;overflow:hidden;display:flex;align-items:center;justify-content:center;font-size:12px;letter-spacing:0.25px;color:#000080;white-space:nowrap">Busy</div>
<div class="ab" style="left:1360px;top:337px;width:122px;height:22px;background:#fff;border:1px solid #000;overflow:hidden;display:flex;align-items:center;justify-content:center;font-size:12px;letter-spacing:0.25px;color:#000;white-space:nowrap">CommandAborted</div>
<div class="ab" style="left:1360px;top:367px;width:122px;height:22px;background:#fff;border:1px solid #000;overflow:hidden;display:flex;align-items:center;justify-content:center;font-size:12px;letter-spacing:0.25px;color:#000;white-space:nowrap">Error</div>
<div class="ab" style="left:1360px;top:397px;width:122px;height:22px;background:#fff;border:1px solid #000;overflow:hidden;display:flex;align-items:center;justify-content:center;font-size:12px;letter-spacing:0.25px;color:#000;white-space:nowrap">ErrorID : 0</div>
<div class="ab" style="left:1370px;top:422px;width:47px;height:52px;background:#fff;border:1px solid #000"></div>
<svg style="left:1370px;top:422px" width="47" height="52" viewBox="0 0 47 52">
<path d="M23 1.5 L42.5 13 V38 L23 49.5 L2 38 V13 Z" fill="#808080"/>
<path d="M2 13.5 L23 25.5 L42.5 13.5 M23 25.5 V50" fill="none" stroke="#fff" stroke-width="1.6"/>
<path d="M9 2.2 Q7.5 0.2 4.8 0.4 Q1.2 0.8 1.4 3.8 Q1.8 6.2 5 7 Q8.8 8 8.8 10.6 Q8.6 13.6 5 13.7 Q2 13.8 0.8 11.6" transform="matrix(1.2,0.7,-0.8,0.46,22,3)" fill="none" stroke="#ff0000" stroke-width="2.4"/>
<path d="M9 2.2 Q7.5 0.2 4.8 0.4 Q1.2 0.8 1.4 3.8 Q1.8 6.2 5 7 Q8.8 8 8.8 10.6 Q8.6 13.6 5 13.7 Q2 13.8 0.8 11.6" transform="matrix(1.05,0.6,0,1.2,6,22)" fill="none" stroke="#ff0000" stroke-width="2.4"/>
<path d="M9 2.2 Q7.5 0.2 4.8 0.4 Q1.2 0.8 1.4 3.8 Q1.8 6.2 5 7 Q8.8 8 8.8 10.6 Q8.6 13.6 5 13.7 Q2 13.8 0.8 11.6" transform="matrix(1.4,-0.85,0,1.15,25.5,32)" fill="none" stroke="#ff0000" stroke-width="2.4"/>
</svg>
<div class="ab" style="left:1420px;top:422px;width:62px;height:52px;background:#fff;border:1px solid #000;overflow:hidden">
<svg style="left:0;top:0" width="62" height="52"><rect x="0" y="12.5" width="62" height="1" fill="#c8d4f0"/><rect x="0" y="21" width="62" height="1" fill="#c8d4f0"/><rect x="0" y="30" width="62" height="1" fill="#c8d4f0"/><rect x="0" y="38" width="62" height="1" fill="#c8d4f0"/><rect x="0" y="47" width="62" height="1" fill="#c8d4f0"/>
<rect x="0" y="12" width="62" height="1" fill="#3050b0"/><rect x="0" y="29" width="62" height="1" fill="#3050b0"/><rect x="0" y="37" width="62" height="1" fill="#3050b0"/><rect x="0" y="44" width="62" height="1" fill="#3050b0"/>
<defs><linearGradient id="pg1420422" x1="0" y1="0" x2="1" y2="1"><stop offset="0" stop-color="#f4f4ec"/><stop offset=".45" stop-color="#d8dad0"/><stop offset=".6" stop-color="#9a9ca8"/><stop offset="1" stop-color="#c8ccd8"/></linearGradient></defs>
<rect x="8.5" y="0" width="43" height="52" fill="url(#pg1420422)"/>
<path d="M10 25 Q20 18 32 32 L30 36 Q20 26 12 30Z" fill="#8a8a8a" opacity=".7"/>
<rect x="8" y="0" width="1.3" height="52" fill="#2040a0"/><rect x="50.5" y="0" width="1.3" height="52" fill="#2040a0"/>
<rect x="12" y="12" width="37" height="1" fill="#3050b0"/>
<path d="M38 16 H46 M34 19.5 H46 M33 23 H46" stroke="#111" stroke-width="1.6" stroke-dasharray="2 1"/>
</svg>
<div class="t" style="left:11px;top:2px;font-size:9px;font-weight:bold;color:#1a2a90;line-height:11px;letter-spacing:-0.3px">PLCopen</div>
<div class="t" style="left:10px;top:29px;font-size:12px;font-weight:bold;color:#1a2a90;line-height:10px;letter-spacing:-0.5px">motion</div>
<div class="t" style="left:10px;top:39px;font-size:12px;font-weight:bold;color:#1a2a90;line-height:10px;letter-spacing:-0.5px">control</div>
</div>
<div class="ab" style="left:1492px;top:218px;width:272px;height:232px;background:#c0c0c0;border:1px solid #000"></div>
<div class="t" style="left:1492px;top:217px;width:272px;text-align:center;font-size:24px;line-height:30px">MC_Stop</div>
<div class="ab" style="left:1502px;top:248px;width:252px;height:22px;background:#c0c0c0;border:1px solid #000;overflow:hidden;display:flex;align-items:center;justify-content:center;font-size:12px;letter-spacing:0.25px;color:#000;white-space:nowrap">Instanz: SR_Motion.MC_Stop_Master</div>
<div class="ab" style="left:1502px;top:278px;width:122px;height:22px;background:#fff;border:1px solid #000;overflow:hidden;display:flex;align-items:center;justify-content:center;font-size:12px;letter-spacing:0.25px;color:#000;white-space:nowrap">Execute</div>
<div class="ab" style="left:1502px;top:308px;width:122px;height:22px;background:#fff;border:1px solid #000;overflow:hidden;display:flex;align-items:center;justify-content:center;font-size:12px;letter-spacing:0.25px;color:#000;white-space:nowrap">Deceleration: 1000.000000</div>
<div class="ab" style="left:1502px;top:338px;width:122px;height:22px;background:#fff;border:1px solid #000;overflow:hidden;display:flex;align-items:center;justify-content:center;font-size:12px;letter-spacing:0.25px;color:#000;white-space:nowrap">Jerk: 0.000000</div>
<div class="ab" style="left:1632px;top:278px;width:122px;height:22px;background:#fff;border:1px solid #000;overflow:hidden;display:flex;align-items:center;justify-content:center;font-size:12px;letter-spacing:0.25px;color:#000;white-space:nowrap">Done</div>
<div class="ab" style="left:1632px;top:308px;width:122px;height:22px;background:#fff;border:1px solid #000;overflow:hidden;display:flex;align-items:center;justify-content:center;font-size:12px;letter-spacing:0.25px;color:#000;white-space:nowrap">Busy</div>
<div class="ab" style="left:1632px;top:338px;width:122px;height:22px;background:#fff;border:1px solid #000;overflow:hidden;display:flex;align-items:center;justify-content:center;font-size:12px;letter-spacing:0.25px;color:#000;white-space:nowrap">Error</div>
<div class="ab" style="left:1632px;top:368px;width:122px;height:22px;background:#fff;border:1px solid #000;overflow:hidden;display:flex;align-items:center;justify-content:center;font-size:12px;letter-spacing:0.25px;color:#000;white-space:nowrap">ErrorID : 0</div>
<div class="ab" style="left:1642px;top:393px;width:47px;height:52px;background:#fff;border:1px solid #000"></div>
<svg style="left:1642px;top:393px" width="47" height="52" viewBox="0 0 47 52">
<path d="M23 1.5 L42.5 13 V38 L23 49.5 L2 38 V13 Z" fill="#808080"/>
<path d="M2 13.5 L23 25.5 L42.5 13.5 M23 25.5 V50" fill="none" stroke="#fff" stroke-width="1.6"/>
<path d="M9 2.2 Q7.5 0.2 4.8 0.4 Q1.2 0.8 1.4 3.8 Q1.8 6.2 5 7 Q8.8 8 8.8 10.6 Q8.6 13.6 5 13.7 Q2 13.8 0.8 11.6" transform="matrix(1.2,0.7,-0.8,0.46,22,3)" fill="none" stroke="#ff0000" stroke-width="2.4"/>
<path d="M9 2.2 Q7.5 0.2 4.8 0.4 Q1.2 0.8 1.4 3.8 Q1.8 6.2 5 7 Q8.8 8 8.8 10.6 Q8.6 13.6 5 13.7 Q2 13.8 0.8 11.6" transform="matrix(1.05,0.6,0,1.2,6,22)" fill="none" stroke="#ff0000" stroke-width="2.4"/>
<path d="M9 2.2 Q7.5 0.2 4.8 0.4 Q1.2 0.8 1.4 3.8 Q1.8 6.2 5 7 Q8.8 8 8.8 10.6 Q8.6 13.6 5 13.7 Q2 13.8 0.8 11.6" transform="matrix(1.4,-0.85,0,1.15,25.5,32)" fill="none" stroke="#ff0000" stroke-width="2.4"/>
</svg>
<div class="ab" style="left:1692px;top:393px;width:62px;height:52px;background:#fff;border:1px solid #000;overflow:hidden">
<svg style="left:0;top:0" width="62" height="52"><rect x="0" y="12.5" width="62" height="1" fill="#c8d4f0"/><rect x="0" y="21" width="62" height="1" fill="#c8d4f0"/><rect x="0" y="30" width="62" height="1" fill="#c8d4f0"/><rect x="0" y="38" width="62" height="1" fill="#c8d4f0"/><rect x="0" y="47" width="62" height="1" fill="#c8d4f0"/>
<rect x="0" y="12" width="62" height="1" fill="#3050b0"/><rect x="0" y="29" width="62" height="1" fill="#3050b0"/><rect x="0" y="37" width="62" height="1" fill="#3050b0"/><rect x="0" y="44" width="62" height="1" fill="#3050b0"/>
<defs><linearGradient id="pg1692393" x1="0" y1="0" x2="1" y2="1"><stop offset="0" stop-color="#f4f4ec"/><stop offset=".45" stop-color="#d8dad0"/><stop offset=".6" stop-color="#9a9ca8"/><stop offset="1" stop-color="#c8ccd8"/></linearGradient></defs>
<rect x="8.5" y="0" width="43" height="52" fill="url(#pg1692393)"/>
<path d="M10 25 Q20 18 32 32 L30 36 Q20 26 12 30Z" fill="#8a8a8a" opacity=".7"/>
<rect x="8" y="0" width="1.3" height="52" fill="#2040a0"/><rect x="50.5" y="0" width="1.3" height="52" fill="#2040a0"/>
<rect x="12" y="12" width="37" height="1" fill="#3050b0"/>
<path d="M38 16 H46 M34 19.5 H46 M33 23 H46" stroke="#111" stroke-width="1.6" stroke-dasharray="2 1"/>
</svg>
<div class="t" style="left:11px;top:2px;font-size:9px;font-weight:bold;color:#1a2a90;line-height:11px;letter-spacing:-0.3px">PLCopen</div>
<div class="t" style="left:10px;top:29px;font-size:12px;font-weight:bold;color:#1a2a90;line-height:10px;letter-spacing:-0.5px">motion</div>
<div class="t" style="left:10px;top:39px;font-size:12px;font-weight:bold;color:#1a2a90;line-height:10px;letter-spacing:-0.5px">control</div>
</div>
<div class="ab" style="left:1221px;top:483px;width:272px;height:241px;background:#c0c0c0;border:1px solid #000"></div>
<div class="t" style="left:1221px;top:482px;width:272px;text-align:center;font-size:24px;line-height:30px">MC_Jog</div>
<div class="ab" style="left:1231px;top:513px;width:252px;height:22px;background:#c0c0c0;border:1px solid #000;overflow:hidden;display:flex;align-items:center;justify-content:center;font-size:12px;letter-spacing:0.25px;color:#000;white-space:nowrap">Instanz: SR_Motion.MC_Jog_Master</div>
<div class="ab" style="left:1231px;top:543px;width:122px;height:22px;background:#fff;border:1px solid #000;overflow:hidden;display:flex;align-items:center;justify-content:center;font-size:12px;letter-spacing:0.25px;color:#000;white-space:nowrap">JogForward</div>
<div class="ab" style="left:1231px;top:573px;width:122px;height:22px;background:#fff;border:1px solid #000;overflow:hidden;display:flex;align-items:center;justify-content:center;font-size:12px;letter-spacing:0.25px;color:#000;white-space:nowrap">JogBackward</div>
<div class="ab" style="left:1231px;top:603px;width:122px;height:22px;background:#fff;border:1px solid #000;overflow:hidden;display:flex;align-items:center;justify-content:center;font-size:12px;letter-spacing:0.25px;color:#000;white-space:nowrap">Velocity : 0.000000</div>
<div class="ab" style="left:1231px;top:633px;width:122px;height:22px;background:#fff;border:1px solid #000;overflow:hidden;display:flex;align-items:center;justify-content:center;font-size:12px;letter-spacing:0.25px;color:#000;white-space:nowrap">Acceleration : 1000.000000</div>
<div class="ab" style="left:1231px;top:663px;width:122px;height:22px;background:#fff;border:1px solid #000;overflow:hidden;display:flex;align-items:center;justify-content:center;font-size:12px;letter-spacing:0.25px;color:#000;white-space:nowrap">Deceleration : 1000.000000</div>
<div class="ab" style="left:1231px;top:693px;width:122px;height:22px;background:#fff;border:1px solid #000;overflow:hidden;display:flex;align-items:center;justify-content:center;font-size:12px;letter-spacing:0.25px;color:#000;white-space:nowrap">Jerk: 0.000000</div>
<div class="ab" style="left:1362px;top:543px;width:121px;height:22px;background:#fff;border:1px solid #000;overflow:hidden;display:flex;align-items:center;justify-content:center;font-size:12px;letter-spacing:0.25px;color:#000;white-space:nowrap">Busy</div>
<div class="ab" style="left:1362px;top:573px;width:121px;height:22px;background:#fff;border:1px solid #000;overflow:hidden;display:flex;align-items:center;justify-content:center;font-size:12px;letter-spacing:0.25px;color:#000;white-space:nowrap">CommandAborted</div>
<div class="ab" style="left:1362px;top:603px;width:121px;height:22px;background:#fff;border:1px solid #000;overflow:hidden;display:flex;align-items:center;justify-content:center;font-size:12px;letter-spacing:0.25px;color:#000;white-space:nowrap">Error</div>
<div class="ab" style="left:1362px;top:633px;width:121px;height:22px;background:#fff;border:1px solid #000;overflow:hidden;display:flex;align-items:center;justify-content:center;font-size:12px;letter-spacing:0.25px;color:#000;white-space:nowrap">ErrorID : 0</div>
<div class="ab" style="left:1371px;top:664px;width:47px;height:52px;background:#fff;border:1px solid #000"></div>
<svg style="left:1371px;top:664px" width="47" height="52" viewBox="0 0 47 52">
<path d="M23 1.5 L42.5 13 V38 L23 49.5 L2 38 V13 Z" fill="#808080"/>
<path d="M2 13.5 L23 25.5 L42.5 13.5 M23 25.5 V50" fill="none" stroke="#fff" stroke-width="1.6"/>
<path d="M9 2.2 Q7.5 0.2 4.8 0.4 Q1.2 0.8 1.4 3.8 Q1.8 6.2 5 7 Q8.8 8 8.8 10.6 Q8.6 13.6 5 13.7 Q2 13.8 0.8 11.6" transform="matrix(1.2,0.7,-0.8,0.46,22,3)" fill="none" stroke="#ff0000" stroke-width="2.4"/>
<path d="M9 2.2 Q7.5 0.2 4.8 0.4 Q1.2 0.8 1.4 3.8 Q1.8 6.2 5 7 Q8.8 8 8.8 10.6 Q8.6 13.6 5 13.7 Q2 13.8 0.8 11.6" transform="matrix(1.05,0.6,0,1.2,6,22)" fill="none" stroke="#ff0000" stroke-width="2.4"/>
<path d="M9 2.2 Q7.5 0.2 4.8 0.4 Q1.2 0.8 1.4 3.8 Q1.8 6.2 5 7 Q8.8 8 8.8 10.6 Q8.6 13.6 5 13.7 Q2 13.8 0.8 11.6" transform="matrix(1.4,-0.85,0,1.15,25.5,32)" fill="none" stroke="#ff0000" stroke-width="2.4"/>
</svg>
<div class="ab" style="left:1421px;top:664px;width:62px;height:52px;background:#fff;border:1px solid #000;overflow:hidden">
<svg style="left:0;top:0" width="62" height="52"><rect x="0" y="12.5" width="62" height="1" fill="#c8d4f0"/><rect x="0" y="21" width="62" height="1" fill="#c8d4f0"/><rect x="0" y="30" width="62" height="1" fill="#c8d4f0"/><rect x="0" y="38" width="62" height="1" fill="#c8d4f0"/><rect x="0" y="47" width="62" height="1" fill="#c8d4f0"/>
<rect x="0" y="12" width="62" height="1" fill="#3050b0"/><rect x="0" y="29" width="62" height="1" fill="#3050b0"/><rect x="0" y="37" width="62" height="1" fill="#3050b0"/><rect x="0" y="44" width="62" height="1" fill="#3050b0"/>
<defs><linearGradient id="pg1421664" x1="0" y1="0" x2="1" y2="1"><stop offset="0" stop-color="#f4f4ec"/><stop offset=".45" stop-color="#d8dad0"/><stop offset=".6" stop-color="#9a9ca8"/><stop offset="1" stop-color="#c8ccd8"/></linearGradient></defs>
<rect x="8.5" y="0" width="43" height="52" fill="url(#pg1421664)"/>
<path d="M10 25 Q20 18 32 32 L30 36 Q20 26 12 30Z" fill="#8a8a8a" opacity=".7"/>
<rect x="8" y="0" width="1.3" height="52" fill="#2040a0"/><rect x="50.5" y="0" width="1.3" height="52" fill="#2040a0"/>
<rect x="12" y="12" width="37" height="1" fill="#3050b0"/>
<path d="M38 16 H46 M34 19.5 H46 M33 23 H46" stroke="#111" stroke-width="1.6" stroke-dasharray="2 1"/>
</svg>
<div class="t" style="left:11px;top:2px;font-size:9px;font-weight:bold;color:#1a2a90;line-height:11px;letter-spacing:-0.3px">PLCopen</div>
<div class="t" style="left:10px;top:29px;font-size:12px;font-weight:bold;color:#1a2a90;line-height:10px;letter-spacing:-0.5px">motion</div>
<div class="t" style="left:10px;top:39px;font-size:12px;font-weight:bold;color:#1a2a90;line-height:10px;letter-spacing:-0.5px">control</div>
</div>
</body></html>
